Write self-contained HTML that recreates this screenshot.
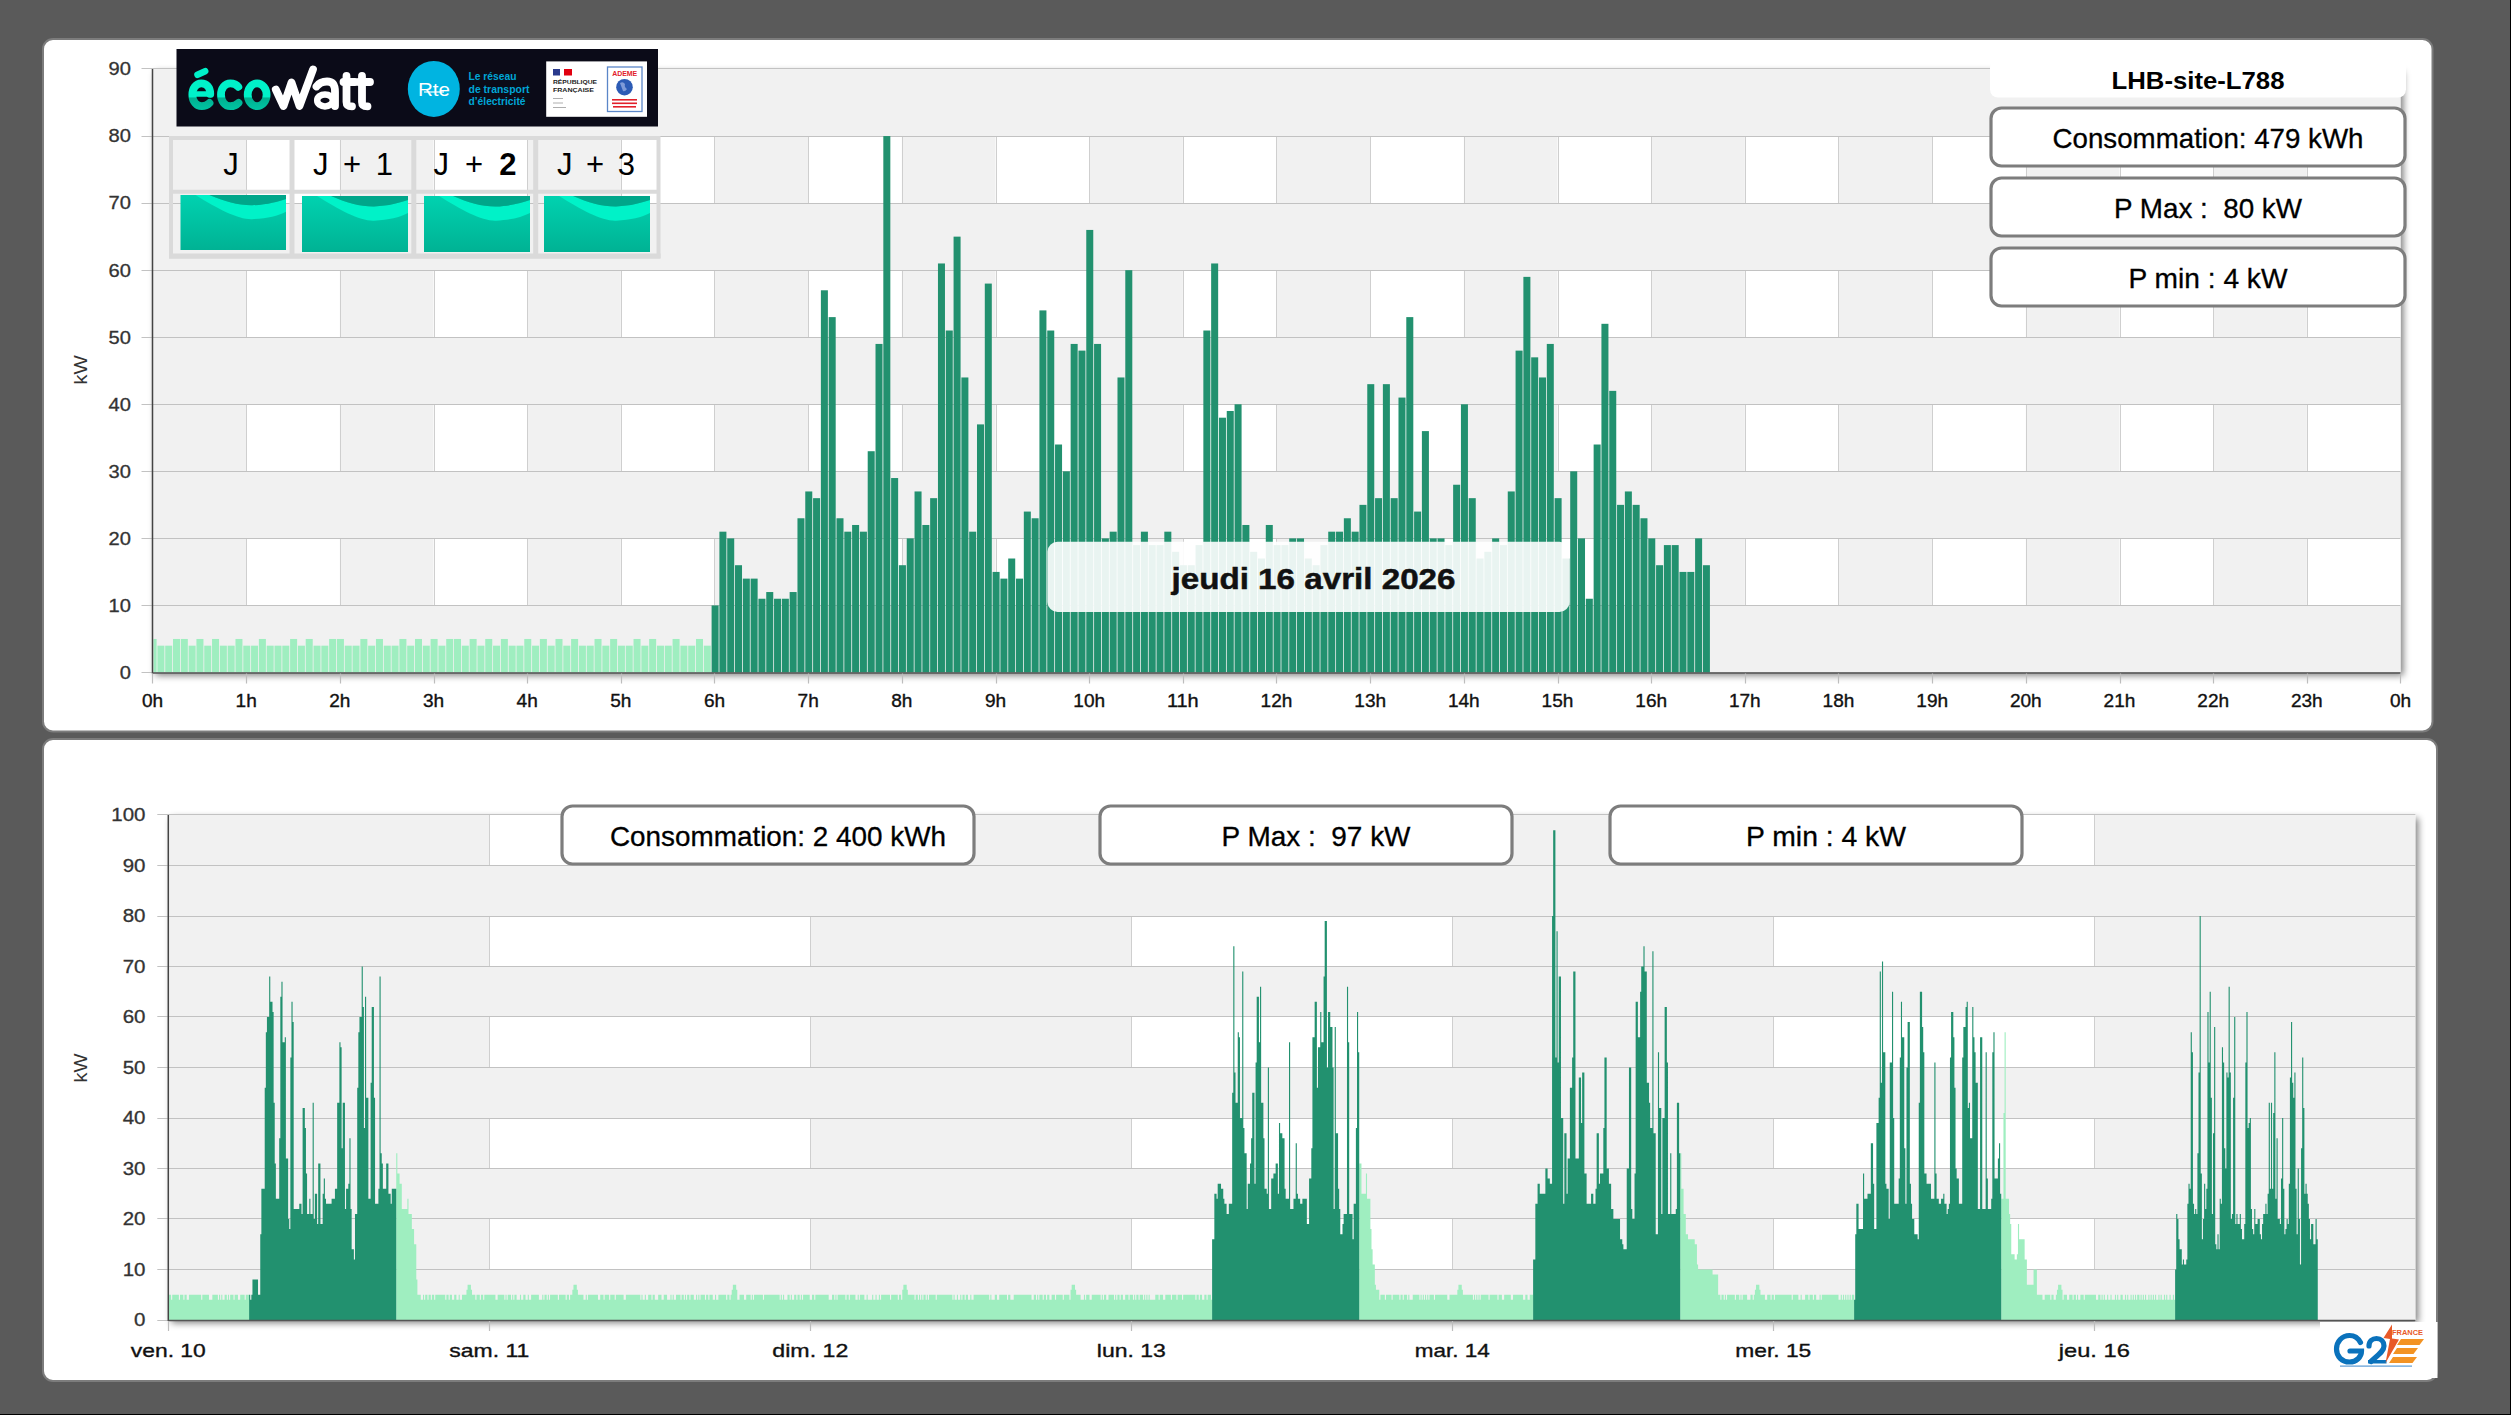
<!DOCTYPE html><html><head><meta charset="utf-8"><style>
html,body{margin:0;padding:0;background:#5a5a5a;width:2511px;height:1415px;overflow:hidden}
svg{display:block}
text{font-family:"Liberation Sans", sans-serif}
</style></head><body>
<svg width="2511" height="1415" viewBox="0 0 2511 1415">
<defs>
<filter id="psh" x="-5%" y="-5%" width="110%" height="115%"><feGaussianBlur in="SourceAlpha" stdDeviation="3.5"/><feOffset dx="3" dy="3" result="o"/><feComponentTransfer><feFuncA type="linear" slope="0.5"/></feComponentTransfer><feMerge><feMergeNode/><feMergeNode in="SourceGraphic"/></feMerge></filter>
<filter id="bsh" x="-5%" y="-20%" width="110%" height="140%"><feGaussianBlur in="SourceAlpha" stdDeviation="1.5"/><feOffset dx="1" dy="1" result="o"/><feComponentTransfer><feFuncA type="linear" slope="0.35"/></feComponentTransfer><feMerge><feMergeNode/><feMergeNode in="SourceGraphic"/></feMerge></filter>
<linearGradient id="wave" x1="0" y1="0" x2="0" y2="1"><stop offset="0" stop-color="#00d2b0"/><stop offset="1" stop-color="#00b294"/></linearGradient>
<linearGradient id="eco" gradientUnits="userSpaceOnUse" x1="0" y1="79" x2="0" y2="111"><stop offset="0" stop-color="#00f2c9"/><stop offset="0.55" stop-color="#00f2c9"/><stop offset="0.6" stop-color="#00b090"/><stop offset="1" stop-color="#00c7a5"/></linearGradient>
</defs>
<rect x="0" y="0" width="2511" height="1415" fill="#5a5a5a"/>

<rect x="43" y="39" width="2389.5" height="692.5" rx="10" ry="10" fill="#fff" stroke="#7c7c7c" stroke-width="2"/>
<rect x="43" y="739" width="2394" height="642" rx="10" ry="10" fill="#fff" stroke="#7c7c7c" stroke-width="2"/>
<rect x="152.5" y="69.0" width="2248.0" height="603.5" fill="#f1f1f1" filter="url(#psh)"/>
<rect x="246.17" y="538.39" width="93.67" height="67.06" fill="#fff"/>
<rect x="433.50" y="538.39" width="93.67" height="67.06" fill="#fff"/>
<rect x="620.83" y="538.39" width="93.67" height="67.06" fill="#fff"/>
<rect x="808.17" y="538.39" width="93.67" height="67.06" fill="#fff"/>
<rect x="995.50" y="538.39" width="93.67" height="67.06" fill="#fff"/>
<rect x="1182.83" y="538.39" width="93.67" height="67.06" fill="#fff"/>
<rect x="1370.17" y="538.39" width="93.67" height="67.06" fill="#fff"/>
<rect x="1557.50" y="538.39" width="93.67" height="67.06" fill="#fff"/>
<rect x="1744.83" y="538.39" width="93.67" height="67.06" fill="#fff"/>
<rect x="1932.17" y="538.39" width="93.67" height="67.06" fill="#fff"/>
<rect x="2119.50" y="538.39" width="93.67" height="67.06" fill="#fff"/>
<rect x="2306.83" y="538.39" width="93.67" height="67.06" fill="#fff"/>
<line x1="246.5" y1="538.39" x2="246.5" y2="605.44" stroke="#cfcfcf" stroke-width="1"/>
<line x1="340.5" y1="538.39" x2="340.5" y2="605.44" stroke="#cfcfcf" stroke-width="1"/>
<line x1="434.5" y1="538.39" x2="434.5" y2="605.44" stroke="#cfcfcf" stroke-width="1"/>
<line x1="527.5" y1="538.39" x2="527.5" y2="605.44" stroke="#cfcfcf" stroke-width="1"/>
<line x1="621.5" y1="538.39" x2="621.5" y2="605.44" stroke="#cfcfcf" stroke-width="1"/>
<line x1="714.5" y1="538.39" x2="714.5" y2="605.44" stroke="#cfcfcf" stroke-width="1"/>
<line x1="808.5" y1="538.39" x2="808.5" y2="605.44" stroke="#cfcfcf" stroke-width="1"/>
<line x1="902.5" y1="538.39" x2="902.5" y2="605.44" stroke="#cfcfcf" stroke-width="1"/>
<line x1="996.5" y1="538.39" x2="996.5" y2="605.44" stroke="#cfcfcf" stroke-width="1"/>
<line x1="1089.5" y1="538.39" x2="1089.5" y2="605.44" stroke="#cfcfcf" stroke-width="1"/>
<line x1="1183.5" y1="538.39" x2="1183.5" y2="605.44" stroke="#cfcfcf" stroke-width="1"/>
<line x1="1276.5" y1="538.39" x2="1276.5" y2="605.44" stroke="#cfcfcf" stroke-width="1"/>
<line x1="1370.5" y1="538.39" x2="1370.5" y2="605.44" stroke="#cfcfcf" stroke-width="1"/>
<line x1="1464.5" y1="538.39" x2="1464.5" y2="605.44" stroke="#cfcfcf" stroke-width="1"/>
<line x1="1558.5" y1="538.39" x2="1558.5" y2="605.44" stroke="#cfcfcf" stroke-width="1"/>
<line x1="1651.5" y1="538.39" x2="1651.5" y2="605.44" stroke="#cfcfcf" stroke-width="1"/>
<line x1="1745.5" y1="538.39" x2="1745.5" y2="605.44" stroke="#cfcfcf" stroke-width="1"/>
<line x1="1838.5" y1="538.39" x2="1838.5" y2="605.44" stroke="#cfcfcf" stroke-width="1"/>
<line x1="1932.5" y1="538.39" x2="1932.5" y2="605.44" stroke="#cfcfcf" stroke-width="1"/>
<line x1="2026.5" y1="538.39" x2="2026.5" y2="605.44" stroke="#cfcfcf" stroke-width="1"/>
<line x1="2120.5" y1="538.39" x2="2120.5" y2="605.44" stroke="#cfcfcf" stroke-width="1"/>
<line x1="2213.5" y1="538.39" x2="2213.5" y2="605.44" stroke="#cfcfcf" stroke-width="1"/>
<line x1="2307.5" y1="538.39" x2="2307.5" y2="605.44" stroke="#cfcfcf" stroke-width="1"/>
<rect x="246.17" y="404.28" width="93.67" height="67.06" fill="#fff"/>
<rect x="433.50" y="404.28" width="93.67" height="67.06" fill="#fff"/>
<rect x="620.83" y="404.28" width="93.67" height="67.06" fill="#fff"/>
<rect x="808.17" y="404.28" width="93.67" height="67.06" fill="#fff"/>
<rect x="995.50" y="404.28" width="93.67" height="67.06" fill="#fff"/>
<rect x="1182.83" y="404.28" width="93.67" height="67.06" fill="#fff"/>
<rect x="1370.17" y="404.28" width="93.67" height="67.06" fill="#fff"/>
<rect x="1557.50" y="404.28" width="93.67" height="67.06" fill="#fff"/>
<rect x="1744.83" y="404.28" width="93.67" height="67.06" fill="#fff"/>
<rect x="1932.17" y="404.28" width="93.67" height="67.06" fill="#fff"/>
<rect x="2119.50" y="404.28" width="93.67" height="67.06" fill="#fff"/>
<rect x="2306.83" y="404.28" width="93.67" height="67.06" fill="#fff"/>
<line x1="246.5" y1="404.28" x2="246.5" y2="471.33" stroke="#cfcfcf" stroke-width="1"/>
<line x1="340.5" y1="404.28" x2="340.5" y2="471.33" stroke="#cfcfcf" stroke-width="1"/>
<line x1="434.5" y1="404.28" x2="434.5" y2="471.33" stroke="#cfcfcf" stroke-width="1"/>
<line x1="527.5" y1="404.28" x2="527.5" y2="471.33" stroke="#cfcfcf" stroke-width="1"/>
<line x1="621.5" y1="404.28" x2="621.5" y2="471.33" stroke="#cfcfcf" stroke-width="1"/>
<line x1="714.5" y1="404.28" x2="714.5" y2="471.33" stroke="#cfcfcf" stroke-width="1"/>
<line x1="808.5" y1="404.28" x2="808.5" y2="471.33" stroke="#cfcfcf" stroke-width="1"/>
<line x1="902.5" y1="404.28" x2="902.5" y2="471.33" stroke="#cfcfcf" stroke-width="1"/>
<line x1="996.5" y1="404.28" x2="996.5" y2="471.33" stroke="#cfcfcf" stroke-width="1"/>
<line x1="1089.5" y1="404.28" x2="1089.5" y2="471.33" stroke="#cfcfcf" stroke-width="1"/>
<line x1="1183.5" y1="404.28" x2="1183.5" y2="471.33" stroke="#cfcfcf" stroke-width="1"/>
<line x1="1276.5" y1="404.28" x2="1276.5" y2="471.33" stroke="#cfcfcf" stroke-width="1"/>
<line x1="1370.5" y1="404.28" x2="1370.5" y2="471.33" stroke="#cfcfcf" stroke-width="1"/>
<line x1="1464.5" y1="404.28" x2="1464.5" y2="471.33" stroke="#cfcfcf" stroke-width="1"/>
<line x1="1558.5" y1="404.28" x2="1558.5" y2="471.33" stroke="#cfcfcf" stroke-width="1"/>
<line x1="1651.5" y1="404.28" x2="1651.5" y2="471.33" stroke="#cfcfcf" stroke-width="1"/>
<line x1="1745.5" y1="404.28" x2="1745.5" y2="471.33" stroke="#cfcfcf" stroke-width="1"/>
<line x1="1838.5" y1="404.28" x2="1838.5" y2="471.33" stroke="#cfcfcf" stroke-width="1"/>
<line x1="1932.5" y1="404.28" x2="1932.5" y2="471.33" stroke="#cfcfcf" stroke-width="1"/>
<line x1="2026.5" y1="404.28" x2="2026.5" y2="471.33" stroke="#cfcfcf" stroke-width="1"/>
<line x1="2120.5" y1="404.28" x2="2120.5" y2="471.33" stroke="#cfcfcf" stroke-width="1"/>
<line x1="2213.5" y1="404.28" x2="2213.5" y2="471.33" stroke="#cfcfcf" stroke-width="1"/>
<line x1="2307.5" y1="404.28" x2="2307.5" y2="471.33" stroke="#cfcfcf" stroke-width="1"/>
<rect x="246.17" y="270.17" width="93.67" height="67.06" fill="#fff"/>
<rect x="433.50" y="270.17" width="93.67" height="67.06" fill="#fff"/>
<rect x="620.83" y="270.17" width="93.67" height="67.06" fill="#fff"/>
<rect x="808.17" y="270.17" width="93.67" height="67.06" fill="#fff"/>
<rect x="995.50" y="270.17" width="93.67" height="67.06" fill="#fff"/>
<rect x="1182.83" y="270.17" width="93.67" height="67.06" fill="#fff"/>
<rect x="1370.17" y="270.17" width="93.67" height="67.06" fill="#fff"/>
<rect x="1557.50" y="270.17" width="93.67" height="67.06" fill="#fff"/>
<rect x="1744.83" y="270.17" width="93.67" height="67.06" fill="#fff"/>
<rect x="1932.17" y="270.17" width="93.67" height="67.06" fill="#fff"/>
<rect x="2119.50" y="270.17" width="93.67" height="67.06" fill="#fff"/>
<rect x="2306.83" y="270.17" width="93.67" height="67.06" fill="#fff"/>
<line x1="246.5" y1="270.17" x2="246.5" y2="337.22" stroke="#cfcfcf" stroke-width="1"/>
<line x1="340.5" y1="270.17" x2="340.5" y2="337.22" stroke="#cfcfcf" stroke-width="1"/>
<line x1="434.5" y1="270.17" x2="434.5" y2="337.22" stroke="#cfcfcf" stroke-width="1"/>
<line x1="527.5" y1="270.17" x2="527.5" y2="337.22" stroke="#cfcfcf" stroke-width="1"/>
<line x1="621.5" y1="270.17" x2="621.5" y2="337.22" stroke="#cfcfcf" stroke-width="1"/>
<line x1="714.5" y1="270.17" x2="714.5" y2="337.22" stroke="#cfcfcf" stroke-width="1"/>
<line x1="808.5" y1="270.17" x2="808.5" y2="337.22" stroke="#cfcfcf" stroke-width="1"/>
<line x1="902.5" y1="270.17" x2="902.5" y2="337.22" stroke="#cfcfcf" stroke-width="1"/>
<line x1="996.5" y1="270.17" x2="996.5" y2="337.22" stroke="#cfcfcf" stroke-width="1"/>
<line x1="1089.5" y1="270.17" x2="1089.5" y2="337.22" stroke="#cfcfcf" stroke-width="1"/>
<line x1="1183.5" y1="270.17" x2="1183.5" y2="337.22" stroke="#cfcfcf" stroke-width="1"/>
<line x1="1276.5" y1="270.17" x2="1276.5" y2="337.22" stroke="#cfcfcf" stroke-width="1"/>
<line x1="1370.5" y1="270.17" x2="1370.5" y2="337.22" stroke="#cfcfcf" stroke-width="1"/>
<line x1="1464.5" y1="270.17" x2="1464.5" y2="337.22" stroke="#cfcfcf" stroke-width="1"/>
<line x1="1558.5" y1="270.17" x2="1558.5" y2="337.22" stroke="#cfcfcf" stroke-width="1"/>
<line x1="1651.5" y1="270.17" x2="1651.5" y2="337.22" stroke="#cfcfcf" stroke-width="1"/>
<line x1="1745.5" y1="270.17" x2="1745.5" y2="337.22" stroke="#cfcfcf" stroke-width="1"/>
<line x1="1838.5" y1="270.17" x2="1838.5" y2="337.22" stroke="#cfcfcf" stroke-width="1"/>
<line x1="1932.5" y1="270.17" x2="1932.5" y2="337.22" stroke="#cfcfcf" stroke-width="1"/>
<line x1="2026.5" y1="270.17" x2="2026.5" y2="337.22" stroke="#cfcfcf" stroke-width="1"/>
<line x1="2120.5" y1="270.17" x2="2120.5" y2="337.22" stroke="#cfcfcf" stroke-width="1"/>
<line x1="2213.5" y1="270.17" x2="2213.5" y2="337.22" stroke="#cfcfcf" stroke-width="1"/>
<line x1="2307.5" y1="270.17" x2="2307.5" y2="337.22" stroke="#cfcfcf" stroke-width="1"/>
<rect x="246.17" y="136.06" width="93.67" height="67.06" fill="#fff"/>
<rect x="433.50" y="136.06" width="93.67" height="67.06" fill="#fff"/>
<rect x="620.83" y="136.06" width="93.67" height="67.06" fill="#fff"/>
<rect x="808.17" y="136.06" width="93.67" height="67.06" fill="#fff"/>
<rect x="995.50" y="136.06" width="93.67" height="67.06" fill="#fff"/>
<rect x="1182.83" y="136.06" width="93.67" height="67.06" fill="#fff"/>
<rect x="1370.17" y="136.06" width="93.67" height="67.06" fill="#fff"/>
<rect x="1557.50" y="136.06" width="93.67" height="67.06" fill="#fff"/>
<rect x="1744.83" y="136.06" width="93.67" height="67.06" fill="#fff"/>
<rect x="1932.17" y="136.06" width="93.67" height="67.06" fill="#fff"/>
<rect x="2119.50" y="136.06" width="93.67" height="67.06" fill="#fff"/>
<rect x="2306.83" y="136.06" width="93.67" height="67.06" fill="#fff"/>
<line x1="246.5" y1="136.06" x2="246.5" y2="203.11" stroke="#cfcfcf" stroke-width="1"/>
<line x1="340.5" y1="136.06" x2="340.5" y2="203.11" stroke="#cfcfcf" stroke-width="1"/>
<line x1="434.5" y1="136.06" x2="434.5" y2="203.11" stroke="#cfcfcf" stroke-width="1"/>
<line x1="527.5" y1="136.06" x2="527.5" y2="203.11" stroke="#cfcfcf" stroke-width="1"/>
<line x1="621.5" y1="136.06" x2="621.5" y2="203.11" stroke="#cfcfcf" stroke-width="1"/>
<line x1="714.5" y1="136.06" x2="714.5" y2="203.11" stroke="#cfcfcf" stroke-width="1"/>
<line x1="808.5" y1="136.06" x2="808.5" y2="203.11" stroke="#cfcfcf" stroke-width="1"/>
<line x1="902.5" y1="136.06" x2="902.5" y2="203.11" stroke="#cfcfcf" stroke-width="1"/>
<line x1="996.5" y1="136.06" x2="996.5" y2="203.11" stroke="#cfcfcf" stroke-width="1"/>
<line x1="1089.5" y1="136.06" x2="1089.5" y2="203.11" stroke="#cfcfcf" stroke-width="1"/>
<line x1="1183.5" y1="136.06" x2="1183.5" y2="203.11" stroke="#cfcfcf" stroke-width="1"/>
<line x1="1276.5" y1="136.06" x2="1276.5" y2="203.11" stroke="#cfcfcf" stroke-width="1"/>
<line x1="1370.5" y1="136.06" x2="1370.5" y2="203.11" stroke="#cfcfcf" stroke-width="1"/>
<line x1="1464.5" y1="136.06" x2="1464.5" y2="203.11" stroke="#cfcfcf" stroke-width="1"/>
<line x1="1558.5" y1="136.06" x2="1558.5" y2="203.11" stroke="#cfcfcf" stroke-width="1"/>
<line x1="1651.5" y1="136.06" x2="1651.5" y2="203.11" stroke="#cfcfcf" stroke-width="1"/>
<line x1="1745.5" y1="136.06" x2="1745.5" y2="203.11" stroke="#cfcfcf" stroke-width="1"/>
<line x1="1838.5" y1="136.06" x2="1838.5" y2="203.11" stroke="#cfcfcf" stroke-width="1"/>
<line x1="1932.5" y1="136.06" x2="1932.5" y2="203.11" stroke="#cfcfcf" stroke-width="1"/>
<line x1="2026.5" y1="136.06" x2="2026.5" y2="203.11" stroke="#cfcfcf" stroke-width="1"/>
<line x1="2120.5" y1="136.06" x2="2120.5" y2="203.11" stroke="#cfcfcf" stroke-width="1"/>
<line x1="2213.5" y1="136.06" x2="2213.5" y2="203.11" stroke="#cfcfcf" stroke-width="1"/>
<line x1="2307.5" y1="136.06" x2="2307.5" y2="203.11" stroke="#cfcfcf" stroke-width="1"/>
<line x1="141.5" y1="672.5" x2="2400.5" y2="672.5" stroke="#c2c2c2" stroke-width="1"/>
<line x1="141.5" y1="605.5" x2="2400.5" y2="605.5" stroke="#c2c2c2" stroke-width="1"/>
<line x1="141.5" y1="538.5" x2="2400.5" y2="538.5" stroke="#c2c2c2" stroke-width="1"/>
<line x1="141.5" y1="471.5" x2="2400.5" y2="471.5" stroke="#c2c2c2" stroke-width="1"/>
<line x1="141.5" y1="404.5" x2="2400.5" y2="404.5" stroke="#c2c2c2" stroke-width="1"/>
<line x1="141.5" y1="337.5" x2="2400.5" y2="337.5" stroke="#c2c2c2" stroke-width="1"/>
<line x1="141.5" y1="270.5" x2="2400.5" y2="270.5" stroke="#c2c2c2" stroke-width="1"/>
<line x1="141.5" y1="203.5" x2="2400.5" y2="203.5" stroke="#c2c2c2" stroke-width="1"/>
<line x1="141.5" y1="136.5" x2="2400.5" y2="136.5" stroke="#c2c2c2" stroke-width="1"/>
<line x1="141.5" y1="68.5" x2="2400.5" y2="68.5" stroke="#c2c2c2" stroke-width="1"/>
<rect x="153.50" y="638.97" width="3.10" height="33.53" fill="#9feec0"/>
<rect x="157.40" y="645.68" width="7.01" height="26.82" fill="#9feec0"/>
<rect x="165.21" y="645.68" width="7.01" height="26.82" fill="#9feec0"/>
<rect x="173.01" y="638.97" width="7.01" height="33.53" fill="#9feec0"/>
<rect x="180.82" y="638.97" width="7.01" height="33.53" fill="#9feec0"/>
<rect x="188.62" y="645.68" width="7.01" height="26.82" fill="#9feec0"/>
<rect x="196.43" y="638.97" width="7.01" height="33.53" fill="#9feec0"/>
<rect x="204.24" y="645.68" width="7.01" height="26.82" fill="#9feec0"/>
<rect x="212.04" y="638.97" width="7.01" height="33.53" fill="#9feec0"/>
<rect x="219.85" y="645.68" width="7.01" height="26.82" fill="#9feec0"/>
<rect x="227.65" y="645.68" width="7.01" height="26.82" fill="#9feec0"/>
<rect x="235.46" y="638.97" width="7.01" height="33.53" fill="#9feec0"/>
<rect x="243.26" y="645.68" width="7.01" height="26.82" fill="#9feec0"/>
<rect x="251.07" y="645.68" width="7.01" height="26.82" fill="#9feec0"/>
<rect x="258.88" y="638.97" width="7.01" height="33.53" fill="#9feec0"/>
<rect x="266.68" y="645.68" width="7.01" height="26.82" fill="#9feec0"/>
<rect x="274.49" y="645.68" width="7.01" height="26.82" fill="#9feec0"/>
<rect x="282.29" y="645.68" width="7.01" height="26.82" fill="#9feec0"/>
<rect x="290.10" y="638.97" width="7.01" height="33.53" fill="#9feec0"/>
<rect x="297.90" y="645.68" width="7.01" height="26.82" fill="#9feec0"/>
<rect x="305.71" y="638.97" width="7.01" height="33.53" fill="#9feec0"/>
<rect x="313.51" y="645.68" width="7.01" height="26.82" fill="#9feec0"/>
<rect x="321.32" y="645.68" width="7.01" height="26.82" fill="#9feec0"/>
<rect x="329.12" y="638.97" width="7.01" height="33.53" fill="#9feec0"/>
<rect x="336.93" y="638.97" width="7.01" height="33.53" fill="#9feec0"/>
<rect x="344.74" y="645.68" width="7.01" height="26.82" fill="#9feec0"/>
<rect x="352.54" y="645.68" width="7.01" height="26.82" fill="#9feec0"/>
<rect x="360.35" y="638.97" width="7.01" height="33.53" fill="#9feec0"/>
<rect x="368.15" y="645.68" width="7.01" height="26.82" fill="#9feec0"/>
<rect x="375.96" y="638.97" width="7.01" height="33.53" fill="#9feec0"/>
<rect x="383.76" y="645.68" width="7.01" height="26.82" fill="#9feec0"/>
<rect x="391.57" y="645.68" width="7.01" height="26.82" fill="#9feec0"/>
<rect x="399.38" y="638.97" width="7.01" height="33.53" fill="#9feec0"/>
<rect x="407.18" y="645.68" width="7.01" height="26.82" fill="#9feec0"/>
<rect x="414.99" y="638.97" width="7.01" height="33.53" fill="#9feec0"/>
<rect x="422.79" y="645.68" width="7.01" height="26.82" fill="#9feec0"/>
<rect x="430.60" y="638.97" width="7.01" height="33.53" fill="#9feec0"/>
<rect x="438.40" y="645.68" width="7.01" height="26.82" fill="#9feec0"/>
<rect x="446.21" y="638.97" width="7.01" height="33.53" fill="#9feec0"/>
<rect x="454.01" y="638.97" width="7.01" height="33.53" fill="#9feec0"/>
<rect x="461.82" y="645.68" width="7.01" height="26.82" fill="#9feec0"/>
<rect x="469.62" y="638.97" width="7.01" height="33.53" fill="#9feec0"/>
<rect x="477.43" y="645.68" width="7.01" height="26.82" fill="#9feec0"/>
<rect x="485.24" y="638.97" width="7.01" height="33.53" fill="#9feec0"/>
<rect x="493.04" y="645.68" width="7.01" height="26.82" fill="#9feec0"/>
<rect x="500.85" y="638.97" width="7.01" height="33.53" fill="#9feec0"/>
<rect x="508.65" y="645.68" width="7.01" height="26.82" fill="#9feec0"/>
<rect x="516.46" y="645.68" width="7.01" height="26.82" fill="#9feec0"/>
<rect x="524.26" y="638.97" width="7.01" height="33.53" fill="#9feec0"/>
<rect x="532.07" y="645.68" width="7.01" height="26.82" fill="#9feec0"/>
<rect x="539.88" y="638.97" width="7.01" height="33.53" fill="#9feec0"/>
<rect x="547.68" y="645.68" width="7.01" height="26.82" fill="#9feec0"/>
<rect x="555.49" y="638.97" width="7.01" height="33.53" fill="#9feec0"/>
<rect x="563.29" y="645.68" width="7.01" height="26.82" fill="#9feec0"/>
<rect x="571.10" y="638.97" width="7.01" height="33.53" fill="#9feec0"/>
<rect x="578.90" y="645.68" width="7.01" height="26.82" fill="#9feec0"/>
<rect x="586.71" y="645.68" width="7.01" height="26.82" fill="#9feec0"/>
<rect x="594.51" y="638.97" width="7.01" height="33.53" fill="#9feec0"/>
<rect x="602.32" y="645.68" width="7.01" height="26.82" fill="#9feec0"/>
<rect x="610.12" y="638.97" width="7.01" height="33.53" fill="#9feec0"/>
<rect x="617.93" y="645.68" width="7.01" height="26.82" fill="#9feec0"/>
<rect x="625.74" y="645.68" width="7.01" height="26.82" fill="#9feec0"/>
<rect x="633.54" y="638.97" width="7.01" height="33.53" fill="#9feec0"/>
<rect x="641.35" y="645.68" width="7.01" height="26.82" fill="#9feec0"/>
<rect x="649.15" y="638.97" width="7.01" height="33.53" fill="#9feec0"/>
<rect x="656.96" y="645.68" width="7.01" height="26.82" fill="#9feec0"/>
<rect x="664.76" y="645.68" width="7.01" height="26.82" fill="#9feec0"/>
<rect x="672.57" y="638.97" width="7.01" height="33.53" fill="#9feec0"/>
<rect x="680.38" y="645.68" width="7.01" height="26.82" fill="#9feec0"/>
<rect x="688.18" y="645.68" width="7.01" height="26.82" fill="#9feec0"/>
<rect x="695.99" y="638.97" width="7.01" height="33.53" fill="#9feec0"/>
<rect x="703.79" y="645.68" width="7.01" height="26.82" fill="#9feec0"/>
<rect x="711.60" y="605.44" width="7.01" height="67.06" fill="#22916f"/>
<rect x="719.40" y="531.68" width="7.01" height="140.82" fill="#22916f"/>
<rect x="727.21" y="538.39" width="7.01" height="134.11" fill="#22916f"/>
<rect x="735.01" y="565.21" width="7.01" height="107.29" fill="#22916f"/>
<rect x="742.82" y="578.62" width="7.01" height="93.88" fill="#22916f"/>
<rect x="750.62" y="578.62" width="7.01" height="93.88" fill="#22916f"/>
<rect x="758.43" y="598.74" width="7.01" height="73.76" fill="#22916f"/>
<rect x="766.24" y="592.03" width="7.01" height="80.47" fill="#22916f"/>
<rect x="774.04" y="598.74" width="7.01" height="73.76" fill="#22916f"/>
<rect x="781.85" y="598.74" width="7.01" height="73.76" fill="#22916f"/>
<rect x="789.65" y="592.03" width="7.01" height="80.47" fill="#22916f"/>
<rect x="797.46" y="518.27" width="7.01" height="154.23" fill="#22916f"/>
<rect x="805.26" y="491.45" width="7.01" height="181.05" fill="#22916f"/>
<rect x="813.07" y="498.16" width="7.01" height="174.34" fill="#22916f"/>
<rect x="820.88" y="290.28" width="7.01" height="382.22" fill="#22916f"/>
<rect x="828.68" y="317.11" width="7.01" height="355.39" fill="#22916f"/>
<rect x="836.49" y="518.27" width="7.01" height="154.23" fill="#22916f"/>
<rect x="844.29" y="531.68" width="7.01" height="140.82" fill="#22916f"/>
<rect x="852.10" y="524.98" width="7.01" height="147.52" fill="#22916f"/>
<rect x="859.90" y="531.68" width="7.01" height="140.82" fill="#22916f"/>
<rect x="867.71" y="451.22" width="7.01" height="221.28" fill="#22916f"/>
<rect x="875.51" y="343.93" width="7.01" height="328.57" fill="#22916f"/>
<rect x="883.32" y="136.06" width="7.01" height="536.44" fill="#22916f"/>
<rect x="891.13" y="478.04" width="7.01" height="194.46" fill="#22916f"/>
<rect x="898.93" y="565.21" width="7.01" height="107.29" fill="#22916f"/>
<rect x="906.74" y="538.39" width="7.01" height="134.11" fill="#22916f"/>
<rect x="914.54" y="491.45" width="7.01" height="181.05" fill="#22916f"/>
<rect x="922.35" y="524.98" width="7.01" height="147.52" fill="#22916f"/>
<rect x="930.15" y="498.16" width="7.01" height="174.34" fill="#22916f"/>
<rect x="937.96" y="263.46" width="7.01" height="409.04" fill="#22916f"/>
<rect x="945.76" y="330.52" width="7.01" height="341.98" fill="#22916f"/>
<rect x="953.57" y="236.64" width="7.01" height="435.86" fill="#22916f"/>
<rect x="961.38" y="377.46" width="7.01" height="295.04" fill="#22916f"/>
<rect x="969.18" y="531.68" width="7.01" height="140.82" fill="#22916f"/>
<rect x="976.99" y="424.39" width="7.01" height="248.11" fill="#22916f"/>
<rect x="984.79" y="283.58" width="7.01" height="388.92" fill="#22916f"/>
<rect x="992.60" y="571.92" width="7.01" height="100.58" fill="#22916f"/>
<rect x="1000.40" y="578.62" width="7.01" height="93.88" fill="#22916f"/>
<rect x="1008.21" y="558.51" width="7.01" height="113.99" fill="#22916f"/>
<rect x="1016.01" y="578.62" width="7.01" height="93.88" fill="#22916f"/>
<rect x="1023.82" y="511.57" width="7.01" height="160.93" fill="#22916f"/>
<rect x="1031.62" y="518.27" width="7.01" height="154.23" fill="#22916f"/>
<rect x="1039.43" y="310.40" width="7.01" height="362.10" fill="#22916f"/>
<rect x="1047.24" y="330.52" width="7.01" height="341.98" fill="#22916f"/>
<rect x="1055.04" y="444.51" width="7.01" height="227.99" fill="#22916f"/>
<rect x="1062.85" y="471.33" width="7.01" height="201.17" fill="#22916f"/>
<rect x="1070.65" y="343.93" width="7.01" height="328.57" fill="#22916f"/>
<rect x="1078.46" y="350.63" width="7.01" height="321.87" fill="#22916f"/>
<rect x="1086.26" y="229.93" width="7.01" height="442.57" fill="#22916f"/>
<rect x="1094.07" y="343.93" width="7.01" height="328.57" fill="#22916f"/>
<rect x="1101.88" y="538.39" width="7.01" height="134.11" fill="#22916f"/>
<rect x="1109.68" y="531.68" width="7.01" height="140.82" fill="#22916f"/>
<rect x="1117.49" y="377.46" width="7.01" height="295.04" fill="#22916f"/>
<rect x="1125.29" y="270.17" width="7.01" height="402.33" fill="#22916f"/>
<rect x="1133.10" y="545.09" width="7.01" height="127.41" fill="#22916f"/>
<rect x="1140.90" y="531.68" width="7.01" height="140.82" fill="#22916f"/>
<rect x="1148.71" y="545.09" width="7.01" height="127.41" fill="#22916f"/>
<rect x="1156.51" y="545.09" width="7.01" height="127.41" fill="#22916f"/>
<rect x="1164.32" y="531.68" width="7.01" height="140.82" fill="#22916f"/>
<rect x="1172.12" y="551.80" width="7.01" height="120.70" fill="#22916f"/>
<rect x="1179.93" y="565.21" width="7.01" height="107.29" fill="#22916f"/>
<rect x="1187.74" y="565.21" width="7.01" height="107.29" fill="#22916f"/>
<rect x="1195.54" y="545.09" width="7.01" height="127.41" fill="#22916f"/>
<rect x="1203.35" y="330.52" width="7.01" height="341.98" fill="#22916f"/>
<rect x="1211.15" y="263.46" width="7.01" height="409.04" fill="#22916f"/>
<rect x="1218.96" y="417.69" width="7.01" height="254.81" fill="#22916f"/>
<rect x="1226.76" y="410.98" width="7.01" height="261.52" fill="#22916f"/>
<rect x="1234.57" y="404.28" width="7.01" height="268.22" fill="#22916f"/>
<rect x="1242.38" y="524.98" width="7.01" height="147.52" fill="#22916f"/>
<rect x="1250.18" y="551.80" width="7.01" height="120.70" fill="#22916f"/>
<rect x="1257.99" y="558.51" width="7.01" height="113.99" fill="#22916f"/>
<rect x="1265.79" y="524.98" width="7.01" height="147.52" fill="#22916f"/>
<rect x="1273.60" y="545.09" width="7.01" height="127.41" fill="#22916f"/>
<rect x="1281.40" y="545.09" width="7.01" height="127.41" fill="#22916f"/>
<rect x="1289.21" y="538.39" width="7.01" height="134.11" fill="#22916f"/>
<rect x="1297.01" y="538.39" width="7.01" height="134.11" fill="#22916f"/>
<rect x="1304.82" y="558.51" width="7.01" height="113.99" fill="#22916f"/>
<rect x="1312.62" y="565.21" width="7.01" height="107.29" fill="#22916f"/>
<rect x="1320.43" y="545.09" width="7.01" height="127.41" fill="#22916f"/>
<rect x="1328.24" y="531.68" width="7.01" height="140.82" fill="#22916f"/>
<rect x="1336.04" y="531.68" width="7.01" height="140.82" fill="#22916f"/>
<rect x="1343.85" y="518.27" width="7.01" height="154.23" fill="#22916f"/>
<rect x="1351.65" y="531.68" width="7.01" height="140.82" fill="#22916f"/>
<rect x="1359.46" y="504.86" width="7.01" height="167.64" fill="#22916f"/>
<rect x="1367.26" y="384.16" width="7.01" height="288.34" fill="#22916f"/>
<rect x="1375.07" y="498.16" width="7.01" height="174.34" fill="#22916f"/>
<rect x="1382.88" y="384.16" width="7.01" height="288.34" fill="#22916f"/>
<rect x="1390.68" y="498.16" width="7.01" height="174.34" fill="#22916f"/>
<rect x="1398.49" y="397.57" width="7.01" height="274.93" fill="#22916f"/>
<rect x="1406.29" y="317.11" width="7.01" height="355.39" fill="#22916f"/>
<rect x="1414.10" y="511.57" width="7.01" height="160.93" fill="#22916f"/>
<rect x="1421.90" y="431.10" width="7.01" height="241.40" fill="#22916f"/>
<rect x="1429.71" y="538.39" width="7.01" height="134.11" fill="#22916f"/>
<rect x="1437.51" y="538.39" width="7.01" height="134.11" fill="#22916f"/>
<rect x="1445.32" y="545.09" width="7.01" height="127.41" fill="#22916f"/>
<rect x="1453.13" y="484.74" width="7.01" height="187.76" fill="#22916f"/>
<rect x="1460.93" y="404.28" width="7.01" height="268.22" fill="#22916f"/>
<rect x="1468.74" y="498.16" width="7.01" height="174.34" fill="#22916f"/>
<rect x="1476.54" y="558.51" width="7.01" height="113.99" fill="#22916f"/>
<rect x="1484.35" y="551.80" width="7.01" height="120.70" fill="#22916f"/>
<rect x="1492.15" y="538.39" width="7.01" height="134.11" fill="#22916f"/>
<rect x="1499.96" y="545.09" width="7.01" height="127.41" fill="#22916f"/>
<rect x="1507.76" y="491.45" width="7.01" height="181.05" fill="#22916f"/>
<rect x="1515.57" y="350.63" width="7.01" height="321.87" fill="#22916f"/>
<rect x="1523.38" y="276.87" width="7.01" height="395.63" fill="#22916f"/>
<rect x="1531.18" y="357.34" width="7.01" height="315.16" fill="#22916f"/>
<rect x="1538.99" y="377.46" width="7.01" height="295.04" fill="#22916f"/>
<rect x="1546.79" y="343.93" width="7.01" height="328.57" fill="#22916f"/>
<rect x="1554.60" y="498.16" width="7.01" height="174.34" fill="#22916f"/>
<rect x="1562.40" y="558.51" width="7.01" height="113.99" fill="#22916f"/>
<rect x="1570.21" y="471.33" width="7.01" height="201.17" fill="#22916f"/>
<rect x="1578.01" y="538.39" width="7.01" height="134.11" fill="#22916f"/>
<rect x="1585.82" y="598.74" width="7.01" height="73.76" fill="#22916f"/>
<rect x="1593.63" y="444.51" width="7.01" height="227.99" fill="#22916f"/>
<rect x="1601.43" y="323.81" width="7.01" height="348.69" fill="#22916f"/>
<rect x="1609.24" y="390.87" width="7.01" height="281.63" fill="#22916f"/>
<rect x="1617.04" y="504.86" width="7.01" height="167.64" fill="#22916f"/>
<rect x="1624.85" y="491.45" width="7.01" height="181.05" fill="#22916f"/>
<rect x="1632.65" y="504.86" width="7.01" height="167.64" fill="#22916f"/>
<rect x="1640.46" y="518.27" width="7.01" height="154.23" fill="#22916f"/>
<rect x="1648.26" y="538.39" width="7.01" height="134.11" fill="#22916f"/>
<rect x="1656.07" y="565.21" width="7.01" height="107.29" fill="#22916f"/>
<rect x="1663.88" y="545.09" width="7.01" height="127.41" fill="#22916f"/>
<rect x="1671.68" y="545.09" width="7.01" height="127.41" fill="#22916f"/>
<rect x="1679.49" y="571.92" width="7.01" height="100.58" fill="#22916f"/>
<rect x="1687.29" y="571.92" width="7.01" height="100.58" fill="#22916f"/>
<rect x="1695.10" y="538.39" width="7.01" height="134.11" fill="#22916f"/>
<rect x="1702.90" y="565.21" width="7.01" height="107.29" fill="#22916f"/>
<line x1="152.5" y1="69.0" x2="152.5" y2="673.5" stroke="#444" stroke-width="1.5"/>
<line x1="152.5" y1="673.0" x2="2400.5" y2="673.0" stroke="#555" stroke-width="1.5"/>
<line x1="152.5" y1="673.5" x2="152.5" y2="683.5" stroke="#bdbdbd" stroke-width="1.2"/>
<text x="152.5" y="706.5" font-size="18" text-anchor="middle" fill="#111" stroke="#111" stroke-width="0.35" textLength="21.2" lengthAdjust="spacingAndGlyphs">0h</text>
<line x1="246.5" y1="673.5" x2="246.5" y2="683.5" stroke="#bdbdbd" stroke-width="1.2"/>
<text x="246.2" y="706.5" font-size="18" text-anchor="middle" fill="#111" stroke="#111" stroke-width="0.35" textLength="21.2" lengthAdjust="spacingAndGlyphs">1h</text>
<line x1="340.5" y1="673.5" x2="340.5" y2="683.5" stroke="#bdbdbd" stroke-width="1.2"/>
<text x="339.8" y="706.5" font-size="18" text-anchor="middle" fill="#111" stroke="#111" stroke-width="0.35" textLength="21.2" lengthAdjust="spacingAndGlyphs">2h</text>
<line x1="434.5" y1="673.5" x2="434.5" y2="683.5" stroke="#bdbdbd" stroke-width="1.2"/>
<text x="433.5" y="706.5" font-size="18" text-anchor="middle" fill="#111" stroke="#111" stroke-width="0.35" textLength="21.2" lengthAdjust="spacingAndGlyphs">3h</text>
<line x1="527.5" y1="673.5" x2="527.5" y2="683.5" stroke="#bdbdbd" stroke-width="1.2"/>
<text x="527.2" y="706.5" font-size="18" text-anchor="middle" fill="#111" stroke="#111" stroke-width="0.35" textLength="21.2" lengthAdjust="spacingAndGlyphs">4h</text>
<line x1="621.5" y1="673.5" x2="621.5" y2="683.5" stroke="#bdbdbd" stroke-width="1.2"/>
<text x="620.8" y="706.5" font-size="18" text-anchor="middle" fill="#111" stroke="#111" stroke-width="0.35" textLength="21.2" lengthAdjust="spacingAndGlyphs">5h</text>
<line x1="714.5" y1="673.5" x2="714.5" y2="683.5" stroke="#bdbdbd" stroke-width="1.2"/>
<text x="714.5" y="706.5" font-size="18" text-anchor="middle" fill="#111" stroke="#111" stroke-width="0.35" textLength="21.2" lengthAdjust="spacingAndGlyphs">6h</text>
<line x1="808.5" y1="673.5" x2="808.5" y2="683.5" stroke="#bdbdbd" stroke-width="1.2"/>
<text x="808.2" y="706.5" font-size="18" text-anchor="middle" fill="#111" stroke="#111" stroke-width="0.35" textLength="21.2" lengthAdjust="spacingAndGlyphs">7h</text>
<line x1="902.5" y1="673.5" x2="902.5" y2="683.5" stroke="#bdbdbd" stroke-width="1.2"/>
<text x="901.8" y="706.5" font-size="18" text-anchor="middle" fill="#111" stroke="#111" stroke-width="0.35" textLength="21.2" lengthAdjust="spacingAndGlyphs">8h</text>
<line x1="996.5" y1="673.5" x2="996.5" y2="683.5" stroke="#bdbdbd" stroke-width="1.2"/>
<text x="995.5" y="706.5" font-size="18" text-anchor="middle" fill="#111" stroke="#111" stroke-width="0.35" textLength="21.2" lengthAdjust="spacingAndGlyphs">9h</text>
<line x1="1089.5" y1="673.5" x2="1089.5" y2="683.5" stroke="#bdbdbd" stroke-width="1.2"/>
<text x="1089.2" y="706.5" font-size="18" text-anchor="middle" fill="#111" stroke="#111" stroke-width="0.35" textLength="31.8" lengthAdjust="spacingAndGlyphs">10h</text>
<line x1="1183.5" y1="673.5" x2="1183.5" y2="683.5" stroke="#bdbdbd" stroke-width="1.2"/>
<text x="1182.8" y="706.5" font-size="18" text-anchor="middle" fill="#111" stroke="#111" stroke-width="0.35" textLength="31.8" lengthAdjust="spacingAndGlyphs">11h</text>
<line x1="1276.5" y1="673.5" x2="1276.5" y2="683.5" stroke="#bdbdbd" stroke-width="1.2"/>
<text x="1276.5" y="706.5" font-size="18" text-anchor="middle" fill="#111" stroke="#111" stroke-width="0.35" textLength="31.8" lengthAdjust="spacingAndGlyphs">12h</text>
<line x1="1370.5" y1="673.5" x2="1370.5" y2="683.5" stroke="#bdbdbd" stroke-width="1.2"/>
<text x="1370.2" y="706.5" font-size="18" text-anchor="middle" fill="#111" stroke="#111" stroke-width="0.35" textLength="31.8" lengthAdjust="spacingAndGlyphs">13h</text>
<line x1="1464.5" y1="673.5" x2="1464.5" y2="683.5" stroke="#bdbdbd" stroke-width="1.2"/>
<text x="1463.8" y="706.5" font-size="18" text-anchor="middle" fill="#111" stroke="#111" stroke-width="0.35" textLength="31.8" lengthAdjust="spacingAndGlyphs">14h</text>
<line x1="1558.5" y1="673.5" x2="1558.5" y2="683.5" stroke="#bdbdbd" stroke-width="1.2"/>
<text x="1557.5" y="706.5" font-size="18" text-anchor="middle" fill="#111" stroke="#111" stroke-width="0.35" textLength="31.8" lengthAdjust="spacingAndGlyphs">15h</text>
<line x1="1651.5" y1="673.5" x2="1651.5" y2="683.5" stroke="#bdbdbd" stroke-width="1.2"/>
<text x="1651.2" y="706.5" font-size="18" text-anchor="middle" fill="#111" stroke="#111" stroke-width="0.35" textLength="31.8" lengthAdjust="spacingAndGlyphs">16h</text>
<line x1="1745.5" y1="673.5" x2="1745.5" y2="683.5" stroke="#bdbdbd" stroke-width="1.2"/>
<text x="1744.8" y="706.5" font-size="18" text-anchor="middle" fill="#111" stroke="#111" stroke-width="0.35" textLength="31.8" lengthAdjust="spacingAndGlyphs">17h</text>
<line x1="1838.5" y1="673.5" x2="1838.5" y2="683.5" stroke="#bdbdbd" stroke-width="1.2"/>
<text x="1838.5" y="706.5" font-size="18" text-anchor="middle" fill="#111" stroke="#111" stroke-width="0.35" textLength="31.8" lengthAdjust="spacingAndGlyphs">18h</text>
<line x1="1932.5" y1="673.5" x2="1932.5" y2="683.5" stroke="#bdbdbd" stroke-width="1.2"/>
<text x="1932.2" y="706.5" font-size="18" text-anchor="middle" fill="#111" stroke="#111" stroke-width="0.35" textLength="31.8" lengthAdjust="spacingAndGlyphs">19h</text>
<line x1="2026.5" y1="673.5" x2="2026.5" y2="683.5" stroke="#bdbdbd" stroke-width="1.2"/>
<text x="2025.8" y="706.5" font-size="18" text-anchor="middle" fill="#111" stroke="#111" stroke-width="0.35" textLength="31.8" lengthAdjust="spacingAndGlyphs">20h</text>
<line x1="2120.5" y1="673.5" x2="2120.5" y2="683.5" stroke="#bdbdbd" stroke-width="1.2"/>
<text x="2119.5" y="706.5" font-size="18" text-anchor="middle" fill="#111" stroke="#111" stroke-width="0.35" textLength="31.8" lengthAdjust="spacingAndGlyphs">21h</text>
<line x1="2213.5" y1="673.5" x2="2213.5" y2="683.5" stroke="#bdbdbd" stroke-width="1.2"/>
<text x="2213.2" y="706.5" font-size="18" text-anchor="middle" fill="#111" stroke="#111" stroke-width="0.35" textLength="31.8" lengthAdjust="spacingAndGlyphs">22h</text>
<line x1="2307.5" y1="673.5" x2="2307.5" y2="683.5" stroke="#bdbdbd" stroke-width="1.2"/>
<text x="2306.8" y="706.5" font-size="18" text-anchor="middle" fill="#111" stroke="#111" stroke-width="0.35" textLength="31.8" lengthAdjust="spacingAndGlyphs">23h</text>
<line x1="2400.5" y1="673.5" x2="2400.5" y2="683.5" stroke="#bdbdbd" stroke-width="1.2"/>
<text x="2400.5" y="706.5" font-size="18" text-anchor="middle" fill="#111" stroke="#111" stroke-width="0.35" textLength="21.2" lengthAdjust="spacingAndGlyphs">0h</text>
<text x="131" y="678.8" font-size="18" text-anchor="end" fill="#333" stroke="#333" stroke-width="0.3" textLength="11.2" lengthAdjust="spacingAndGlyphs">0</text>
<text x="131" y="611.7" font-size="18" text-anchor="end" fill="#333" stroke="#333" stroke-width="0.3" textLength="22.4" lengthAdjust="spacingAndGlyphs">10</text>
<text x="131" y="544.7" font-size="18" text-anchor="end" fill="#333" stroke="#333" stroke-width="0.3" textLength="22.4" lengthAdjust="spacingAndGlyphs">20</text>
<text x="131" y="477.6" font-size="18" text-anchor="end" fill="#333" stroke="#333" stroke-width="0.3" textLength="22.4" lengthAdjust="spacingAndGlyphs">30</text>
<text x="131" y="410.6" font-size="18" text-anchor="end" fill="#333" stroke="#333" stroke-width="0.3" textLength="22.4" lengthAdjust="spacingAndGlyphs">40</text>
<text x="131" y="343.5" font-size="18" text-anchor="end" fill="#333" stroke="#333" stroke-width="0.3" textLength="22.4" lengthAdjust="spacingAndGlyphs">50</text>
<text x="131" y="276.5" font-size="18" text-anchor="end" fill="#333" stroke="#333" stroke-width="0.3" textLength="22.4" lengthAdjust="spacingAndGlyphs">60</text>
<text x="131" y="209.4" font-size="18" text-anchor="end" fill="#333" stroke="#333" stroke-width="0.3" textLength="22.4" lengthAdjust="spacingAndGlyphs">70</text>
<text x="131" y="142.4" font-size="18" text-anchor="end" fill="#333" stroke="#333" stroke-width="0.3" textLength="22.4" lengthAdjust="spacingAndGlyphs">80</text>
<text x="131" y="75.3" font-size="18" text-anchor="end" fill="#333" stroke="#333" stroke-width="0.3" textLength="22.4" lengthAdjust="spacingAndGlyphs">90</text>
<text transform="translate(86.5,370) rotate(-90)" font-size="19" text-anchor="middle" fill="#333" textLength="29.5" lengthAdjust="spacingAndGlyphs">kW</text>
<rect x="1047.5" y="541.8" width="522" height="70.2" rx="10" ry="10" fill="rgba(255,255,255,0.9)"/>
<text x="1313.5" y="588.5" font-size="29" font-weight="bold" text-anchor="middle" fill="#111" stroke="#111" stroke-width="0.5" textLength="284" lengthAdjust="spacingAndGlyphs">jeudi 16 avril 2026</text>
<rect x="1990" y="60" width="416" height="37.5" rx="8" ry="8" fill="#fff"/>
<text x="2198" y="89" font-size="24" font-weight="bold" text-anchor="middle" fill="#000" textLength="173" lengthAdjust="spacingAndGlyphs">LHB-site-L788</text>
<rect x="1991" y="108" width="414" height="58" rx="10.5" ry="10.5" fill="#fff" stroke="#7d7d7d" stroke-width="3.2"/>
<text x="2208.0" y="147.5" font-size="28" text-anchor="middle" fill="#000" stroke="#000" stroke-width="0.3" textLength="311" lengthAdjust="spacingAndGlyphs">Consommation: 479 kWh</text>
<rect x="1991" y="178" width="414" height="58" rx="10.5" ry="10.5" fill="#fff" stroke="#7d7d7d" stroke-width="3.2"/>
<text x="2208.0" y="217.5" font-size="28" text-anchor="middle" fill="#000" stroke="#000" stroke-width="0.3" textLength="188" lengthAdjust="spacingAndGlyphs">P Max :&#160; 80 kW</text>
<rect x="1991" y="248" width="414" height="58" rx="10.5" ry="10.5" fill="#fff" stroke="#7d7d7d" stroke-width="3.2"/>
<text x="2208.0" y="287.5" font-size="28" text-anchor="middle" fill="#000" stroke="#000" stroke-width="0.3" textLength="159" lengthAdjust="spacingAndGlyphs">P min : 4 kW</text>
<rect x="168.3" y="815.0" width="2247.0" height="505.0" fill="#f1f1f1" filter="url(#psh)"/>
<rect x="489.30" y="1219.00" width="321.00" height="50.50" fill="#fff"/>
<rect x="1131.30" y="1219.00" width="321.00" height="50.50" fill="#fff"/>
<rect x="1773.30" y="1219.00" width="321.00" height="50.50" fill="#fff"/>
<line x1="489.5" y1="1219.00" x2="489.5" y2="1269.50" stroke="#cfcfcf" stroke-width="1"/>
<line x1="810.5" y1="1219.00" x2="810.5" y2="1269.50" stroke="#cfcfcf" stroke-width="1"/>
<line x1="1131.5" y1="1219.00" x2="1131.5" y2="1269.50" stroke="#cfcfcf" stroke-width="1"/>
<line x1="1452.5" y1="1219.00" x2="1452.5" y2="1269.50" stroke="#cfcfcf" stroke-width="1"/>
<line x1="1773.5" y1="1219.00" x2="1773.5" y2="1269.50" stroke="#cfcfcf" stroke-width="1"/>
<line x1="2094.5" y1="1219.00" x2="2094.5" y2="1269.50" stroke="#cfcfcf" stroke-width="1"/>
<rect x="489.30" y="1118.00" width="321.00" height="50.50" fill="#fff"/>
<rect x="1131.30" y="1118.00" width="321.00" height="50.50" fill="#fff"/>
<rect x="1773.30" y="1118.00" width="321.00" height="50.50" fill="#fff"/>
<line x1="489.5" y1="1118.00" x2="489.5" y2="1168.50" stroke="#cfcfcf" stroke-width="1"/>
<line x1="810.5" y1="1118.00" x2="810.5" y2="1168.50" stroke="#cfcfcf" stroke-width="1"/>
<line x1="1131.5" y1="1118.00" x2="1131.5" y2="1168.50" stroke="#cfcfcf" stroke-width="1"/>
<line x1="1452.5" y1="1118.00" x2="1452.5" y2="1168.50" stroke="#cfcfcf" stroke-width="1"/>
<line x1="1773.5" y1="1118.00" x2="1773.5" y2="1168.50" stroke="#cfcfcf" stroke-width="1"/>
<line x1="2094.5" y1="1118.00" x2="2094.5" y2="1168.50" stroke="#cfcfcf" stroke-width="1"/>
<rect x="489.30" y="1017.00" width="321.00" height="50.50" fill="#fff"/>
<rect x="1131.30" y="1017.00" width="321.00" height="50.50" fill="#fff"/>
<rect x="1773.30" y="1017.00" width="321.00" height="50.50" fill="#fff"/>
<line x1="489.5" y1="1017.00" x2="489.5" y2="1067.50" stroke="#cfcfcf" stroke-width="1"/>
<line x1="810.5" y1="1017.00" x2="810.5" y2="1067.50" stroke="#cfcfcf" stroke-width="1"/>
<line x1="1131.5" y1="1017.00" x2="1131.5" y2="1067.50" stroke="#cfcfcf" stroke-width="1"/>
<line x1="1452.5" y1="1017.00" x2="1452.5" y2="1067.50" stroke="#cfcfcf" stroke-width="1"/>
<line x1="1773.5" y1="1017.00" x2="1773.5" y2="1067.50" stroke="#cfcfcf" stroke-width="1"/>
<line x1="2094.5" y1="1017.00" x2="2094.5" y2="1067.50" stroke="#cfcfcf" stroke-width="1"/>
<rect x="489.30" y="916.00" width="321.00" height="50.50" fill="#fff"/>
<rect x="1131.30" y="916.00" width="321.00" height="50.50" fill="#fff"/>
<rect x="1773.30" y="916.00" width="321.00" height="50.50" fill="#fff"/>
<line x1="489.5" y1="916.00" x2="489.5" y2="966.50" stroke="#cfcfcf" stroke-width="1"/>
<line x1="810.5" y1="916.00" x2="810.5" y2="966.50" stroke="#cfcfcf" stroke-width="1"/>
<line x1="1131.5" y1="916.00" x2="1131.5" y2="966.50" stroke="#cfcfcf" stroke-width="1"/>
<line x1="1452.5" y1="916.00" x2="1452.5" y2="966.50" stroke="#cfcfcf" stroke-width="1"/>
<line x1="1773.5" y1="916.00" x2="1773.5" y2="966.50" stroke="#cfcfcf" stroke-width="1"/>
<line x1="2094.5" y1="916.00" x2="2094.5" y2="966.50" stroke="#cfcfcf" stroke-width="1"/>
<rect x="489.30" y="815.00" width="321.00" height="50.50" fill="#fff"/>
<rect x="1131.30" y="815.00" width="321.00" height="50.50" fill="#fff"/>
<rect x="1773.30" y="815.00" width="321.00" height="50.50" fill="#fff"/>
<line x1="489.5" y1="815.00" x2="489.5" y2="865.50" stroke="#cfcfcf" stroke-width="1"/>
<line x1="810.5" y1="815.00" x2="810.5" y2="865.50" stroke="#cfcfcf" stroke-width="1"/>
<line x1="1131.5" y1="815.00" x2="1131.5" y2="865.50" stroke="#cfcfcf" stroke-width="1"/>
<line x1="1452.5" y1="815.00" x2="1452.5" y2="865.50" stroke="#cfcfcf" stroke-width="1"/>
<line x1="1773.5" y1="815.00" x2="1773.5" y2="865.50" stroke="#cfcfcf" stroke-width="1"/>
<line x1="2094.5" y1="815.00" x2="2094.5" y2="865.50" stroke="#cfcfcf" stroke-width="1"/>
<line x1="157.3" y1="1320.5" x2="2415.3" y2="1320.5" stroke="#c2c2c2" stroke-width="1"/>
<line x1="157.3" y1="1269.5" x2="2415.3" y2="1269.5" stroke="#c2c2c2" stroke-width="1"/>
<line x1="157.3" y1="1218.5" x2="2415.3" y2="1218.5" stroke="#c2c2c2" stroke-width="1"/>
<line x1="157.3" y1="1168.5" x2="2415.3" y2="1168.5" stroke="#c2c2c2" stroke-width="1"/>
<line x1="157.3" y1="1118.5" x2="2415.3" y2="1118.5" stroke="#c2c2c2" stroke-width="1"/>
<line x1="157.3" y1="1067.5" x2="2415.3" y2="1067.5" stroke="#c2c2c2" stroke-width="1"/>
<line x1="157.3" y1="1016.5" x2="2415.3" y2="1016.5" stroke="#c2c2c2" stroke-width="1"/>
<line x1="157.3" y1="966.5" x2="2415.3" y2="966.5" stroke="#c2c2c2" stroke-width="1"/>
<line x1="157.3" y1="916.5" x2="2415.3" y2="916.5" stroke="#c2c2c2" stroke-width="1"/>
<line x1="157.3" y1="865.5" x2="2415.3" y2="865.5" stroke="#c2c2c2" stroke-width="1"/>
<line x1="157.3" y1="814.5" x2="2415.3" y2="814.5" stroke="#c2c2c2" stroke-width="1"/>
<path d="M168.86 1320.0V1294.75H169.97V1294.75H171.09V1299.80H172.20V1294.75H173.32V1294.75H174.43V1294.75H175.54V1294.75H176.66V1294.75H177.77V1294.75H178.89V1299.80H180.00V1294.75H181.12V1294.75H182.23V1294.75H183.35V1299.80H184.46V1294.75H185.58V1294.75H186.69V1299.80H187.81V1299.80H188.92V1294.75H190.03V1294.75H191.15V1294.75H192.26V1294.75H193.38V1294.75H194.49V1294.75H195.61V1294.75H196.72V1294.75H197.84V1294.75H198.95V1294.75H200.07V1294.75H201.18V1299.80H202.29V1294.75H203.41V1294.75H204.52V1294.75H205.64V1294.75H206.75V1294.75H207.87V1294.75H208.98V1299.80H210.10V1299.80H211.21V1299.80H212.33V1294.75H213.44V1294.75H214.56V1294.75H215.67V1294.75H216.78V1294.75H217.90V1299.80H219.01V1294.75H220.13V1299.80H221.24V1294.75H222.36V1299.80H223.47V1299.80H224.59V1294.75H225.70V1294.75H226.82V1299.80H227.93V1294.75H229.04V1299.80H230.16V1294.75H231.27V1294.75H232.39V1294.75H233.50V1299.80H234.62V1294.75H235.73V1294.75H236.85V1294.75H237.96V1299.80H239.08V1299.80H240.19V1294.75H241.31V1294.75H242.42V1294.75H243.53V1294.75H244.65V1299.80H245.76V1294.75H246.88V1294.75H247.99V1294.75H249.11V1320.0ZM396.23 1320.0V1153.35H397.35V1173.55H398.46V1173.55H399.58V1183.65H400.69V1183.65H401.81V1208.90H402.92V1208.90H404.03V1208.90H405.15V1208.90H406.26V1208.90H407.38V1198.80H408.49V1213.95H409.61V1213.95H410.72V1213.95H411.84V1229.10H412.95V1229.10H414.07V1244.25H415.18V1244.25H416.29V1279.60H417.41V1294.75H418.52V1294.75H419.64V1294.75H420.75V1299.80H421.87V1299.80H422.98V1294.75H424.10V1299.80H425.21V1294.75H426.33V1294.75H427.44V1299.80H428.56V1294.75H429.67V1294.75H430.78V1299.80H431.90V1294.75H433.01V1294.75H434.13V1299.80H435.24V1294.75H436.36V1294.75H437.47V1294.75H438.59V1294.75H439.70V1294.75H440.82V1294.75H441.93V1294.75H443.04V1294.75H444.16V1294.75H445.27V1299.80H446.39V1294.75H447.50V1294.75H448.62V1299.80H449.73V1294.75H450.85V1294.75H451.96V1299.80H453.08V1299.80H454.19V1294.75H455.31V1294.75H456.42V1299.80H457.53V1299.80H458.65V1294.75H459.76V1299.80H460.88V1299.80H461.99V1294.75H463.11V1294.75H464.22V1294.75H465.34V1294.75H466.45V1289.70H467.57V1284.65H468.68V1284.65H469.79V1284.65H470.91V1289.70H472.02V1294.75H473.14V1294.75H474.25V1294.75H475.37V1299.80H476.48V1294.75H477.60V1294.75H478.71V1294.75H479.83V1299.80H480.94V1294.75H482.06V1294.75H483.17V1299.80H484.28V1294.75H485.40V1294.75H486.51V1294.75H487.63V1294.75H488.74V1294.75H489.86V1294.75H490.97V1294.75H492.09V1294.75H493.20V1294.75H494.32V1294.75H495.43V1299.80H496.54V1299.80H497.66V1294.75H498.77V1294.75H499.89V1294.75H501.00V1294.75H502.12V1294.75H503.23V1294.75H504.35V1299.80H505.46V1294.75H506.58V1299.80H507.69V1294.75H508.81V1294.75H509.92V1294.75H511.03V1299.80H512.15V1294.75H513.26V1299.80H514.38V1294.75H515.49V1294.75H516.61V1299.80H517.72V1299.80H518.84V1299.80H519.95V1294.75H521.07V1299.80H522.18V1299.80H523.29V1294.75H524.41V1294.75H525.52V1299.80H526.64V1299.80H527.75V1294.75H528.87V1299.80H529.98V1299.80H531.10V1294.75H532.21V1294.75H533.33V1294.75H534.44V1294.75H535.56V1294.75H536.67V1294.75H537.78V1294.75H538.90V1299.80H540.01V1299.80H541.13V1299.80H542.24V1294.75H543.36V1299.80H544.47V1294.75H545.59V1294.75H546.70V1299.80H547.82V1294.75H548.93V1299.80H550.04V1294.75H551.16V1294.75H552.27V1294.75H553.39V1294.75H554.50V1294.75H555.62V1294.75H556.73V1294.75H557.85V1299.80H558.96V1294.75H560.08V1294.75H561.19V1294.75H562.31V1294.75H563.42V1294.75H564.53V1294.75H565.65V1299.80H566.76V1294.75H567.88V1294.75H568.99V1299.80H570.11V1294.75H571.22V1294.75H572.34V1289.70H573.45V1284.65H574.57V1284.65H575.68V1284.65H576.79V1289.70H577.91V1294.75H579.02V1294.75H580.14V1294.75H581.25V1294.75H582.37V1294.75H583.48V1299.80H584.60V1299.80H585.71V1294.75H586.83V1299.80H587.94V1294.75H589.06V1294.75H590.17V1294.75H591.28V1294.75H592.40V1294.75H593.51V1294.75H594.63V1294.75H595.74V1294.75H596.86V1294.75H597.97V1299.80H599.09V1299.80H600.20V1294.75H601.32V1294.75H602.43V1294.75H603.54V1299.80H604.66V1294.75H605.77V1294.75H606.89V1294.75H608.00V1294.75H609.12V1299.80H610.23V1294.75H611.35V1294.75H612.46V1294.75H613.58V1294.75H614.69V1299.80H615.81V1294.75H616.92V1294.75H618.03V1294.75H619.15V1294.75H620.26V1294.75H621.38V1294.75H622.49V1294.75H623.61V1299.80H624.72V1299.80H625.84V1294.75H626.95V1294.75H628.07V1294.75H629.18V1294.75H630.29V1294.75H631.41V1294.75H632.52V1294.75H633.64V1294.75H634.75V1294.75H635.87V1294.75H636.98V1294.75H638.10V1294.75H639.21V1294.75H640.33V1299.80H641.44V1294.75H642.56V1299.80H643.67V1299.80H644.78V1294.75H645.90V1299.80H647.01V1299.80H648.13V1294.75H649.24V1294.75H650.36V1294.75H651.47V1299.80H652.59V1294.75H653.70V1294.75H654.82V1299.80H655.93V1299.80H657.04V1299.80H658.16V1294.75H659.27V1294.75H660.39V1294.75H661.50V1299.80H662.62V1299.80H663.73V1294.75H664.85V1294.75H665.96V1294.75H667.08V1299.80H668.19V1299.80H669.31V1299.80H670.42V1294.75H671.53V1299.80H672.65V1294.75H673.76V1299.80H674.88V1299.80H675.99V1294.75H677.11V1294.75H678.22V1294.75H679.34V1294.75H680.45V1299.80H681.57V1294.75H682.68V1294.75H683.79V1299.80H684.91V1294.75H686.02V1299.80H687.14V1294.75H688.25V1294.75H689.37V1299.80H690.48V1294.75H691.60V1294.75H692.71V1294.75H693.83V1299.80H694.94V1299.80H696.06V1294.75H697.17V1299.80H698.28V1294.75H699.40V1299.80H700.51V1294.75H701.63V1294.75H702.74V1294.75H703.86V1294.75H704.97V1299.80H706.09V1294.75H707.20V1294.75H708.32V1299.80H709.43V1294.75H710.54V1294.75H711.66V1294.75H712.77V1299.80H713.89V1299.80H715.00V1294.75H716.12V1299.80H717.23V1299.80H718.35V1294.75H719.46V1294.75H720.58V1294.75H721.69V1294.75H722.81V1294.75H723.92V1294.75H725.03V1294.75H726.15V1299.80H727.26V1294.75H728.38V1294.75H729.49V1299.80H730.61V1294.75H731.72V1289.70H732.84V1284.65H733.95V1284.65H735.07V1284.65H736.18V1289.70H737.29V1299.80H738.41V1299.80H739.52V1294.75H740.64V1294.75H741.75V1294.75H742.87V1294.75H743.98V1299.80H745.10V1299.80H746.21V1294.75H747.33V1294.75H748.44V1294.75H749.56V1294.75H750.67V1299.80H751.78V1294.75H752.90V1299.80H754.01V1294.75H755.13V1294.75H756.24V1294.75H757.36V1294.75H758.47V1294.75H759.59V1294.75H760.70V1294.75H761.82V1294.75H762.93V1299.80H764.04V1294.75H765.16V1294.75H766.27V1294.75H767.39V1294.75H768.50V1294.75H769.62V1294.75H770.73V1294.75H771.85V1294.75H772.96V1294.75H774.08V1294.75H775.19V1294.75H776.31V1294.75H777.42V1294.75H778.53V1294.75H779.65V1299.80H780.76V1294.75H781.88V1299.80H782.99V1294.75H784.11V1299.80H785.22V1299.80H786.34V1299.80H787.45V1294.75H788.57V1294.75H789.68V1299.80H790.79V1294.75H791.91V1299.80H793.02V1299.80H794.14V1294.75H795.25V1294.75H796.37V1299.80H797.48V1294.75H798.60V1294.75H799.71V1299.80H800.83V1294.75H801.94V1299.80H803.06V1294.75H804.17V1294.75H805.28V1294.75H806.40V1294.75H807.51V1294.75H808.63V1294.75H809.74V1299.80H810.86V1299.80H811.97V1294.75H813.09V1294.75H814.20V1299.80H815.32V1294.75H816.43V1294.75H817.54V1294.75H818.66V1294.75H819.77V1294.75H820.89V1294.75H822.00V1294.75H823.12V1294.75H824.23V1294.75H825.35V1294.75H826.46V1294.75H827.58V1294.75H828.69V1299.80H829.81V1299.80H830.92V1299.80H832.03V1294.75H833.15V1294.75H834.26V1299.80H835.38V1294.75H836.49V1299.80H837.61V1294.75H838.72V1294.75H839.84V1294.75H840.95V1294.75H842.07V1294.75H843.18V1294.75H844.29V1294.75H845.41V1299.80H846.52V1294.75H847.64V1294.75H848.75V1299.80H849.87V1294.75H850.98V1294.75H852.10V1294.75H853.21V1294.75H854.33V1294.75H855.44V1299.80H856.56V1299.80H857.67V1294.75H858.78V1299.80H859.90V1294.75H861.01V1294.75H862.13V1294.75H863.24V1294.75H864.36V1299.80H865.47V1299.80H866.59V1294.75H867.70V1299.80H868.82V1299.80H869.93V1299.80H871.04V1299.80H872.16V1294.75H873.27V1299.80H874.39V1299.80H875.50V1294.75H876.62V1299.80H877.73V1299.80H878.85V1294.75H879.96V1299.80H881.08V1294.75H882.19V1294.75H883.31V1294.75H884.42V1294.75H885.53V1294.75H886.65V1294.75H887.76V1294.75H888.88V1294.75H889.99V1299.80H891.11V1294.75H892.22V1294.75H893.34V1294.75H894.45V1294.75H895.57V1294.75H896.68V1294.75H897.79V1299.80H898.91V1294.75H900.02V1294.75H901.14V1299.80H902.25V1289.70H903.37V1284.65H904.48V1284.65H905.60V1284.65H906.71V1289.70H907.83V1294.75H908.94V1294.75H910.06V1294.75H911.17V1294.75H912.28V1294.75H913.40V1294.75H914.51V1299.80H915.63V1294.75H916.74V1294.75H917.86V1299.80H918.97V1294.75H920.09V1299.80H921.20V1294.75H922.32V1299.80H923.43V1294.75H924.54V1294.75H925.66V1299.80H926.77V1294.75H927.89V1299.80H929.00V1294.75H930.12V1294.75H931.23V1294.75H932.35V1294.75H933.46V1294.75H934.58V1294.75H935.69V1299.80H936.81V1294.75H937.92V1294.75H939.03V1294.75H940.15V1294.75H941.26V1294.75H942.38V1294.75H943.49V1294.75H944.61V1294.75H945.72V1294.75H946.84V1294.75H947.95V1294.75H949.07V1294.75H950.18V1294.75H951.29V1294.75H952.41V1299.80H953.52V1294.75H954.64V1299.80H955.75V1299.80H956.87V1294.75H957.98V1299.80H959.10V1299.80H960.21V1294.75H961.33V1299.80H962.44V1294.75H963.56V1294.75H964.67V1299.80H965.78V1294.75H966.90V1294.75H968.01V1299.80H969.13V1299.80H970.24V1294.75H971.36V1299.80H972.47V1299.80H973.59V1294.75H974.70V1294.75H975.82V1294.75H976.93V1294.75H978.04V1294.75H979.16V1294.75H980.27V1294.75H981.39V1294.75H982.50V1294.75H983.62V1294.75H984.73V1294.75H985.85V1294.75H986.96V1294.75H988.08V1294.75H989.19V1299.80H990.31V1294.75H991.42V1299.80H992.53V1299.80H993.65V1299.80H994.76V1294.75H995.88V1294.75H996.99V1299.80H998.11V1299.80H999.22V1294.75H1000.34V1294.75H1001.45V1294.75H1002.57V1294.75H1003.68V1294.75H1004.79V1294.75H1005.91V1294.75H1007.02V1299.80H1008.14V1294.75H1009.25V1294.75H1010.37V1299.80H1011.48V1299.80H1012.60V1299.80H1013.71V1294.75H1014.83V1294.75H1015.94V1294.75H1017.06V1294.75H1018.17V1294.75H1019.28V1294.75H1020.40V1294.75H1021.51V1294.75H1022.63V1294.75H1023.74V1294.75H1024.86V1294.75H1025.97V1294.75H1027.09V1294.75H1028.20V1294.75H1029.32V1294.75H1030.43V1294.75H1031.54V1299.80H1032.66V1299.80H1033.77V1294.75H1034.89V1294.75H1036.00V1299.80H1037.12V1294.75H1038.23V1299.80H1039.35V1294.75H1040.46V1294.75H1041.58V1294.75H1042.69V1299.80H1043.81V1294.75H1044.92V1294.75H1046.03V1299.80H1047.15V1294.75H1048.26V1294.75H1049.38V1299.80H1050.49V1299.80H1051.61V1294.75H1052.72V1294.75H1053.84V1294.75H1054.95V1299.80H1056.07V1294.75H1057.18V1294.75H1058.29V1294.75H1059.41V1294.75H1060.52V1294.75H1061.64V1294.75H1062.75V1299.80H1063.87V1294.75H1064.98V1294.75H1066.10V1294.75H1067.21V1294.75H1068.33V1294.75H1069.44V1299.80H1070.56V1289.70H1071.67V1284.65H1072.78V1284.65H1073.90V1284.65H1075.01V1289.70H1076.13V1294.75H1077.24V1294.75H1078.36V1294.75H1079.47V1294.75H1080.59V1299.80H1081.70V1299.80H1082.82V1299.80H1083.93V1294.75H1085.04V1299.80H1086.16V1294.75H1087.27V1294.75H1088.39V1294.75H1089.50V1299.80H1090.62V1299.80H1091.73V1294.75H1092.85V1294.75H1093.96V1294.75H1095.08V1294.75H1096.19V1294.75H1097.31V1294.75H1098.42V1294.75H1099.53V1294.75H1100.65V1299.80H1101.76V1294.75H1102.88V1299.80H1103.99V1294.75H1105.11V1294.75H1106.22V1299.80H1107.34V1299.80H1108.45V1294.75H1109.57V1294.75H1110.68V1294.75H1111.79V1294.75H1112.91V1294.75H1114.02V1299.80H1115.14V1294.75H1116.25V1299.80H1117.37V1294.75H1118.48V1294.75H1119.60V1299.80H1120.71V1294.75H1121.83V1294.75H1122.94V1299.80H1124.06V1299.80H1125.17V1294.75H1126.28V1294.75H1127.40V1294.75H1128.51V1299.80H1129.63V1294.75H1130.74V1294.75H1131.86V1294.75H1132.97V1299.80H1134.09V1294.75H1135.20V1299.80H1136.32V1294.75H1137.43V1294.75H1138.54V1299.80H1139.66V1294.75H1140.77V1294.75H1141.89V1294.75H1143.00V1299.80H1144.12V1294.75H1145.23V1299.80H1146.35V1294.75H1147.46V1299.80H1148.58V1294.75H1149.69V1299.80H1150.81V1299.80H1151.92V1299.80H1153.03V1299.80H1154.15V1299.80H1155.26V1294.75H1156.38V1294.75H1157.49V1294.75H1158.61V1299.80H1159.72V1294.75H1160.84V1294.75H1161.95V1294.75H1163.07V1299.80H1164.18V1299.80H1165.29V1294.75H1166.41V1294.75H1167.52V1294.75H1168.64V1294.75H1169.75V1294.75H1170.87V1299.80H1171.98V1294.75H1173.10V1294.75H1174.21V1294.75H1175.33V1294.75H1176.44V1299.80H1177.56V1294.75H1178.67V1294.75H1179.78V1294.75H1180.90V1294.75H1182.01V1299.80H1183.13V1294.75H1184.24V1294.75H1185.36V1294.75H1186.47V1294.75H1187.59V1294.75H1188.70V1294.75H1189.82V1294.75H1190.93V1294.75H1192.04V1294.75H1193.16V1294.75H1194.27V1294.75H1195.39V1299.80H1196.50V1294.75H1197.62V1294.75H1198.73V1299.80H1199.85V1294.75H1200.96V1294.75H1202.08V1299.80H1203.19V1299.80H1204.31V1294.75H1205.42V1294.75H1206.53V1299.80H1207.65V1294.75H1208.76V1294.75H1209.88V1294.75H1210.99V1299.80H1212.11V1320.0ZM1359.23 1320.0V1163.45H1360.35V1163.45H1361.46V1193.75H1362.58V1193.75H1363.69V1193.75H1364.81V1193.75H1365.92V1173.55H1367.03V1198.80H1368.15V1198.80H1369.26V1198.80H1370.38V1229.10H1371.49V1249.30H1372.61V1264.45H1373.72V1264.45H1374.84V1284.65H1375.95V1289.70H1377.07V1289.70H1378.18V1289.70H1379.29V1299.80H1380.41V1294.75H1381.52V1294.75H1382.64V1294.75H1383.75V1294.75H1384.87V1299.80H1385.98V1294.75H1387.10V1294.75H1388.21V1294.75H1389.33V1294.75H1390.44V1294.75H1391.56V1299.80H1392.67V1294.75H1393.78V1294.75H1394.90V1294.75H1396.01V1294.75H1397.13V1294.75H1398.24V1294.75H1399.36V1299.80H1400.47V1294.75H1401.59V1294.75H1402.70V1299.80H1403.82V1294.75H1404.93V1294.75H1406.04V1294.75H1407.16V1299.80H1408.27V1294.75H1409.39V1299.80H1410.50V1299.80H1411.62V1299.80H1412.73V1294.75H1413.85V1294.75H1414.96V1294.75H1416.08V1294.75H1417.19V1294.75H1418.31V1294.75H1419.42V1299.80H1420.53V1294.75H1421.65V1299.80H1422.76V1294.75H1423.88V1299.80H1424.99V1294.75H1426.11V1299.80H1427.22V1294.75H1428.34V1299.80H1429.45V1294.75H1430.57V1294.75H1431.68V1294.75H1432.79V1294.75H1433.91V1299.80H1435.02V1294.75H1436.14V1294.75H1437.25V1294.75H1438.37V1294.75H1439.48V1294.75H1440.60V1294.75H1441.71V1294.75H1442.83V1294.75H1443.94V1294.75H1445.06V1294.75H1446.17V1294.75H1447.28V1299.80H1448.40V1299.80H1449.51V1294.75H1450.63V1294.75H1451.74V1294.75H1452.86V1294.75H1453.97V1294.75H1455.09V1294.75H1456.20V1294.75H1457.32V1289.70H1458.43V1284.65H1459.54V1284.65H1460.66V1284.65H1461.77V1289.70H1462.89V1294.75H1464.00V1294.75H1465.12V1294.75H1466.23V1294.75H1467.35V1294.75H1468.46V1294.75H1469.58V1294.75H1470.69V1294.75H1471.81V1294.75H1472.92V1299.80H1474.03V1294.75H1475.15V1299.80H1476.26V1294.75H1477.38V1299.80H1478.49V1294.75H1479.61V1299.80H1480.72V1294.75H1481.84V1294.75H1482.95V1294.75H1484.07V1294.75H1485.18V1294.75H1486.29V1294.75H1487.41V1294.75H1488.52V1299.80H1489.64V1294.75H1490.75V1294.75H1491.87V1294.75H1492.98V1294.75H1494.10V1294.75H1495.21V1294.75H1496.33V1294.75H1497.44V1299.80H1498.56V1294.75H1499.67V1294.75H1500.78V1294.75H1501.90V1299.80H1503.01V1299.80H1504.13V1294.75H1505.24V1294.75H1506.36V1294.75H1507.47V1294.75H1508.59V1294.75H1509.70V1294.75H1510.82V1299.80H1511.93V1299.80H1513.04V1294.75H1514.16V1294.75H1515.27V1294.75H1516.39V1294.75H1517.50V1294.75H1518.62V1294.75H1519.73V1294.75H1520.85V1294.75H1521.96V1294.75H1523.08V1299.80H1524.19V1299.80H1525.31V1294.75H1526.42V1294.75H1527.53V1299.80H1528.65V1299.80H1529.76V1294.75H1530.88V1294.75H1531.99V1294.75H1533.11V1320.0ZM1680.23 1320.0V1153.35H1681.35V1188.70H1682.46V1188.70H1683.58V1213.95H1684.69V1213.95H1685.81V1234.15H1686.92V1234.15H1688.03V1239.20H1689.15V1239.20H1690.26V1239.20H1691.38V1239.20H1692.49V1239.20H1693.61V1239.20H1694.72V1244.25H1695.84V1244.25H1696.95V1264.45H1698.07V1269.50H1699.18V1269.50H1700.29V1269.50H1701.41V1269.50H1702.52V1269.50H1703.64V1269.50H1704.75V1269.50H1705.87V1269.50H1706.98V1269.50H1708.10V1269.50H1709.21V1269.50H1710.33V1269.50H1711.44V1269.50H1712.56V1274.55H1713.67V1274.55H1714.78V1274.55H1715.90V1274.55H1717.01V1274.55H1718.13V1294.75H1719.24V1294.75H1720.36V1299.80H1721.47V1294.75H1722.59V1294.75H1723.70V1299.80H1724.82V1294.75H1725.93V1299.80H1727.04V1294.75H1728.16V1294.75H1729.27V1294.75H1730.39V1294.75H1731.50V1294.75H1732.62V1294.75H1733.73V1294.75H1734.85V1299.80H1735.96V1294.75H1737.08V1294.75H1738.19V1294.75H1739.31V1299.80H1740.42V1294.75H1741.53V1299.80H1742.65V1294.75H1743.76V1294.75H1744.88V1294.75H1745.99V1294.75H1747.11V1299.80H1748.22V1299.80H1749.34V1299.80H1750.45V1294.75H1751.57V1294.75H1752.68V1299.80H1753.79V1294.75H1754.91V1289.70H1756.02V1284.65H1757.14V1284.65H1758.25V1284.65H1759.37V1289.70H1760.48V1294.75H1761.60V1294.75H1762.71V1294.75H1763.83V1294.75H1764.94V1299.80H1766.06V1299.80H1767.17V1294.75H1768.28V1294.75H1769.40V1294.75H1770.51V1299.80H1771.63V1294.75H1772.74V1294.75H1773.86V1299.80H1774.97V1294.75H1776.09V1294.75H1777.20V1294.75H1778.32V1294.75H1779.43V1294.75H1780.54V1294.75H1781.66V1294.75H1782.77V1294.75H1783.89V1294.75H1785.00V1294.75H1786.12V1294.75H1787.23V1294.75H1788.35V1294.75H1789.46V1294.75H1790.58V1294.75H1791.69V1299.80H1792.81V1294.75H1793.92V1294.75H1795.03V1294.75H1796.15V1294.75H1797.26V1294.75H1798.38V1299.80H1799.49V1299.80H1800.61V1294.75H1801.72V1299.80H1802.84V1299.80H1803.95V1299.80H1805.07V1294.75H1806.18V1294.75H1807.29V1294.75H1808.41V1299.80H1809.52V1294.75H1810.64V1294.75H1811.75V1294.75H1812.87V1299.80H1813.98V1294.75H1815.10V1294.75H1816.21V1299.80H1817.33V1299.80H1818.44V1299.80H1819.56V1294.75H1820.67V1299.80H1821.78V1294.75H1822.90V1294.75H1824.01V1294.75H1825.13V1294.75H1826.24V1294.75H1827.36V1294.75H1828.47V1294.75H1829.59V1294.75H1830.70V1294.75H1831.82V1294.75H1832.93V1294.75H1834.04V1294.75H1835.16V1294.75H1836.27V1294.75H1837.39V1294.75H1838.50V1299.80H1839.62V1299.80H1840.73V1294.75H1841.85V1299.80H1842.96V1294.75H1844.08V1299.80H1845.19V1294.75H1846.31V1299.80H1847.42V1294.75H1848.53V1299.80H1849.65V1294.75H1850.76V1299.80H1851.88V1294.75H1852.99V1294.75H1854.11V1320.0ZM2001.23 1320.0V1198.80H2002.35V1198.80H2003.46V1112.95H2004.58V1032.15H2005.69V1198.80H2006.81V1198.80H2007.92V1198.80H2009.03V1213.95H2010.15V1224.05H2011.26V1254.35H2012.38V1254.35H2013.49V1254.35H2014.61V1259.40H2015.72V1259.40H2016.84V1254.35H2017.95V1224.05H2019.07V1239.20H2020.18V1239.20H2021.29V1239.20H2022.41V1239.20H2023.52V1239.20H2024.64V1259.40H2025.75V1259.40H2026.87V1284.65H2027.98V1284.65H2029.10V1284.65H2030.21V1284.65H2031.33V1284.65H2032.44V1284.65H2033.56V1269.50H2034.67V1269.50H2035.78V1269.50H2036.90V1294.75H2038.01V1294.75H2039.13V1294.75H2040.24V1294.75H2041.36V1294.75H2042.47V1299.80H2043.59V1299.80H2044.70V1294.75H2045.82V1294.75H2046.93V1294.75H2048.04V1294.75H2049.16V1294.75H2050.27V1299.80H2051.39V1294.75H2052.50V1294.75H2053.62V1299.80H2054.73V1299.80H2055.85V1294.75H2056.96V1289.70H2058.08V1284.65H2059.19V1284.65H2060.31V1284.65H2061.42V1289.70H2062.53V1299.80H2063.65V1294.75H2064.76V1294.75H2065.88V1294.75H2066.99V1299.80H2068.11V1299.80H2069.22V1294.75H2070.34V1294.75H2071.45V1294.75H2072.57V1299.80H2073.68V1294.75H2074.79V1294.75H2075.91V1299.80H2077.02V1294.75H2078.14V1299.80H2079.25V1299.80H2080.37V1294.75H2081.48V1294.75H2082.60V1294.75H2083.71V1299.80H2084.83V1294.75H2085.94V1294.75H2087.06V1294.75H2088.17V1294.75H2089.28V1294.75H2090.40V1294.75H2091.51V1294.75H2092.63V1294.75H2093.74V1294.75H2094.86V1294.75H2095.97V1299.80H2097.09V1299.80H2098.20V1294.75H2099.32V1294.75H2100.43V1299.80H2101.54V1294.75H2102.66V1299.80H2103.77V1294.75H2104.89V1299.80H2106.00V1299.80H2107.12V1294.75H2108.23V1299.80H2109.35V1299.80H2110.46V1294.75H2111.58V1299.80H2112.69V1299.80H2113.81V1299.80H2114.92V1294.75H2116.03V1299.80H2117.15V1294.75H2118.26V1299.80H2119.38V1299.80H2120.49V1294.75H2121.61V1294.75H2122.72V1299.80H2123.84V1299.80H2124.95V1294.75H2126.07V1299.80H2127.18V1294.75H2128.29V1299.80H2129.41V1299.80H2130.52V1294.75H2131.64V1299.80H2132.75V1294.75H2133.87V1299.80H2134.98V1294.75H2136.10V1299.80H2137.21V1294.75H2138.33V1294.75H2139.44V1299.80H2140.56V1294.75H2141.67V1299.80H2142.78V1294.75H2143.90V1299.80H2145.01V1294.75H2146.13V1299.80H2147.24V1299.80H2148.36V1294.75H2149.47V1299.80H2150.59V1294.75H2151.70V1299.80H2152.82V1294.75H2153.93V1299.80H2155.04V1294.75H2156.16V1299.80H2157.27V1299.80H2158.39V1294.75H2159.50V1299.80H2160.62V1294.75H2161.73V1299.80H2162.85V1299.80H2163.96V1294.75H2165.08V1299.80H2166.19V1294.75H2167.31V1299.80H2168.42V1299.80H2169.53V1294.75H2170.65V1299.80H2171.76V1299.80H2172.88V1294.75H2173.99V1299.80H2175.11V1320.0Z" fill="#9feec0"/>
<path d="M249.11 1320.0V1294.75H250.22V1299.80H251.34V1294.75H252.45V1279.60H253.57V1279.60H254.68V1279.60H255.79V1279.60H256.91V1279.60H258.02V1294.75H259.14V1294.75H260.25V1234.15H261.37V1188.70H262.48V1188.70H263.60V1188.70H264.71V1087.70H265.83V1032.15H266.94V1017.00H268.06V1017.00H269.17V976.60H270.28V1001.85H271.40V1001.85H272.51V1011.95H273.63V1102.85H274.74V1163.45H275.86V1198.80H276.97V1198.80H278.09V1198.80H279.20V1138.20H280.32V996.80H281.43V981.65H282.54V1042.25H283.66V1042.25H284.77V1037.20H285.89V1158.40H287.00V1158.40H288.12V1219.00H289.23V1229.10H290.35V1057.40H291.46V1001.85H292.58V1022.05H293.69V1208.90H294.81V1208.90H295.92V1208.90H297.03V1208.90H298.15V1208.90H299.26V1203.85H300.38V1203.85H301.49V1213.95H302.61V1107.90H303.72V1107.90H304.84V1128.10H305.95V1173.55H307.07V1213.95H308.18V1213.95H309.29V1198.80H310.41V1213.95H311.52V1213.95H312.64V1102.85H313.75V1219.00H314.87V1193.75H315.98V1193.75H317.10V1224.05H318.21V1163.45H319.33V1163.45H320.44V1224.05H321.56V1224.05H322.67V1193.75H323.78V1178.60H324.90V1198.80H326.01V1203.85H327.13V1203.85H328.24V1203.85H329.36V1203.85H330.47V1203.85H331.59V1198.80H332.70V1198.80H333.82V1198.80H334.93V1188.70H336.04V1188.70H337.16V1102.85H338.27V1102.85H339.39V1042.25H340.50V1047.30H341.62V1148.30H342.73V1102.85H343.85V1102.85H344.96V1208.90H346.08V1188.70H347.19V1188.70H348.31V1183.65H349.42V1138.20H350.53V1208.90H351.65V1249.30H352.76V1249.30H353.88V1259.40H354.99V1213.95H356.11V1213.95H357.22V1087.70H358.34V1032.15H359.45V1017.00H360.57V1017.00H361.68V966.50H362.79V1006.90H363.91V1128.10H365.02V996.80H366.14V1097.80H367.25V1097.80H368.37V1198.80H369.48V1198.80H370.60V1082.65H371.71V1006.90H372.83V1006.90H373.94V1097.80H375.06V1203.85H376.17V1203.85H377.28V1203.85H378.40V1188.70H379.51V976.60H380.63V1153.35H381.74V1163.45H382.86V1188.70H383.97V1188.70H385.09V1188.70H386.20V1163.45H387.32V1163.45H388.43V1193.75H389.54V1193.75H390.66V1203.85H391.77V1188.70H392.89V1188.70H394.00V1188.70H395.12V1188.70H396.23V1320.0ZM1212.11 1320.0V1239.20H1213.22V1239.20H1214.34V1193.75H1215.45V1193.75H1216.57V1198.80H1217.68V1183.65H1218.79V1183.65H1219.91V1183.65H1221.02V1188.70H1222.14V1188.70H1223.25V1198.80H1224.37V1203.85H1225.48V1203.85H1226.60V1213.95H1227.71V1213.95H1228.83V1203.85H1229.94V1203.85H1231.06V1203.85H1232.17V1092.75H1233.28V946.30H1234.40V1072.55H1235.51V1102.85H1236.63V1102.85H1237.74V1032.15H1238.86V1037.20H1239.97V1118.00H1241.09V1118.00H1242.20V971.55H1243.32V1128.10H1244.43V1153.35H1245.54V1153.35H1246.66V1208.90H1247.77V1183.65H1248.89V1183.65H1250.00V1163.45H1251.12V1138.20H1252.23V1092.75H1253.35V1092.75H1254.46V1183.65H1255.58V1062.45H1256.69V996.80H1257.81V996.80H1258.92V1042.25H1260.03V986.70H1261.15V1102.85H1262.26V1102.85H1263.38V1138.20H1264.49V1188.70H1265.61V1188.70H1266.72V1193.75H1267.84V1067.50H1268.95V1208.90H1270.07V1208.90H1271.18V1178.60H1272.29V1178.60H1273.41V1173.55H1274.52V1173.55H1275.64V1163.45H1276.75V1163.45H1277.87V1193.75H1278.98V1123.05H1280.10V1133.15H1281.21V1133.15H1282.33V1138.20H1283.44V1138.20H1284.56V1188.70H1285.67V1198.80H1286.78V1198.80H1287.90V1198.80H1289.01V1042.25H1290.13V1208.90H1291.24V1208.90H1292.36V1208.90H1293.47V1198.80H1294.59V1198.80H1295.70V1143.25H1296.82V1193.75H1297.93V1198.80H1299.04V1198.80H1300.16V1203.85H1301.27V1203.85H1302.39V1198.80H1303.50V1198.80H1304.62V1198.80H1305.73V1198.80H1306.85V1224.05H1307.96V1224.05H1309.08V1178.60H1310.19V1178.60H1311.31V1148.30H1312.42V1037.20H1313.53V1037.20H1314.65V1001.85H1315.76V1001.85H1316.88V1087.70H1317.99V1047.30H1319.11V1047.30H1320.22V1011.95H1321.34V1042.25H1322.45V1042.25H1323.57V976.60H1324.68V921.05H1325.79V921.05H1326.91V1067.50H1328.02V1011.95H1329.14V1011.95H1330.25V1027.10H1331.37V1027.10H1332.48V1067.50H1333.60V1208.90H1334.71V1027.10H1335.83V1133.15H1336.94V1133.15H1338.06V1188.70H1339.17V1208.90H1340.28V1234.15H1341.40V1234.15H1342.51V1224.05H1343.63V1213.95H1344.74V1213.95H1345.86V1213.95H1346.97V986.70H1348.09V1042.25H1349.20V1213.95H1350.32V1213.95H1351.43V1213.95H1352.54V1239.20H1353.66V1203.85H1354.77V1203.85H1355.89V1128.10H1357.00V1011.95H1358.12V1052.35H1359.23V1320.0ZM1533.11 1320.0V1259.40H1534.22V1259.40H1535.34V1203.85H1536.45V1203.85H1537.57V1183.65H1538.68V1183.65H1539.79V1193.75H1540.91V1193.75H1542.02V1193.75H1543.14V1193.75H1544.25V1193.75H1545.37V1168.50H1546.48V1168.50H1547.60V1178.60H1548.71V1178.60H1549.83V1183.65H1550.94V1183.65H1552.06V916.00H1553.17V830.15H1554.28V830.15H1555.40V1057.40H1556.51V931.15H1557.63V1062.45H1558.74V976.60H1559.86V976.60H1560.97V1118.00H1562.09V1118.00H1563.20V1203.85H1564.32V1133.15H1565.43V1133.15H1566.54V1193.75H1567.66V1158.40H1568.77V1158.40H1569.89V1087.70H1571.00V1087.70H1572.12V1057.40H1573.23V971.55H1574.35V971.55H1575.46V1158.40H1576.58V1158.40H1577.69V1158.40H1578.81V1077.60H1579.92V1077.60H1581.03V1123.05H1582.15V1072.55H1583.26V1072.55H1584.38V1173.55H1585.49V1173.55H1586.61V1203.85H1587.72V1203.85H1588.84V1203.85H1589.95V1203.85H1591.07V1193.75H1592.18V1193.75H1593.29V1203.85H1594.41V1203.85H1595.52V1188.70H1596.64V1133.15H1597.75V1133.15H1598.87V1183.65H1599.98V1173.55H1601.10V1173.55H1602.21V1173.55H1603.33V1128.10H1604.44V1057.40H1605.56V1057.40H1606.67V1168.50H1607.78V1168.50H1608.90V1183.65H1610.01V1183.65H1611.13V1208.90H1612.24V1208.90H1613.36V1219.00H1614.47V1219.00H1615.59V1219.00H1616.70V1219.00H1617.82V1219.00H1618.93V1219.00H1620.04V1239.20H1621.16V1239.20H1622.27V1244.25H1623.39V1249.30H1624.50V1249.30H1625.62V1249.30H1626.73V1168.50H1627.85V1168.50H1628.96V1067.50H1630.08V1067.50H1631.19V1208.90H1632.31V1219.00H1633.42V1219.00H1634.53V1173.55H1635.65V1001.85H1636.76V1001.85H1637.88V1037.20H1638.99V1037.20H1640.11V991.75H1641.22V966.50H1642.34V966.50H1643.45V946.30H1644.57V971.55H1645.68V971.55H1646.79V1082.65H1647.91V1082.65H1649.02V1102.85H1650.14V1128.10H1651.25V1128.10H1652.37V951.35H1653.48V1133.15H1654.60V1133.15H1655.71V1234.15H1656.83V1234.15H1657.94V1052.35H1659.06V1107.90H1660.17V1107.90H1661.28V1213.95H1662.40V1118.00H1663.51V1118.00H1664.63V1006.90H1665.74V1006.90H1666.86V1062.45H1667.97V1213.95H1669.09V1213.95H1670.20V1153.35H1671.32V1213.95H1672.43V1213.95H1673.54V1213.95H1674.66V1213.95H1675.77V1208.90H1676.89V1102.85H1678.00V1102.85H1679.12V1153.35H1680.23V1320.0ZM1854.11 1320.0V1299.80H1855.22V1234.15H1856.34V1203.85H1857.45V1203.85H1858.57V1229.10H1859.68V1229.10H1860.79V1229.10H1861.91V1229.10H1863.02V1173.55H1864.14V1198.80H1865.25V1198.80H1866.37V1198.80H1867.48V1193.75H1868.60V1193.75H1869.71V1193.75H1870.83V1143.25H1871.94V1143.25H1873.06V1183.65H1874.17V1229.10H1875.28V1229.10H1876.40V1123.05H1877.51V1123.05H1878.63V1097.80H1879.74V971.55H1880.86V1082.65H1881.97V961.45H1883.09V1052.35H1884.20V1052.35H1885.32V1183.65H1886.43V1188.70H1887.54V1188.70H1888.66V1219.00H1889.77V1062.45H1890.89V1062.45H1892.00V991.75H1893.12V1118.00H1894.23V1203.85H1895.35V1203.85H1896.46V1203.85H1897.58V1203.85H1898.69V1178.60H1899.81V1057.40H1900.92V1001.85H1902.03V1037.20H1903.15V1037.20H1904.26V1148.30H1905.38V1203.85H1906.49V1067.50H1907.61V1022.05H1908.72V1022.05H1909.84V1183.65H1910.95V1203.85H1912.07V1219.00H1913.18V1219.00H1914.29V1234.15H1915.41V1234.15H1916.52V1234.15H1917.64V1239.20H1918.75V1102.85H1919.87V991.75H1920.98V991.75H1922.10V1027.10H1923.21V1052.35H1924.33V1173.55H1925.44V1173.55H1926.56V1183.65H1927.67V1183.65H1928.78V1183.65H1929.90V1183.65H1931.01V1198.80H1932.13V1198.80H1933.24V1198.80H1934.36V1062.45H1935.47V1173.55H1936.59V1198.80H1937.70V1198.80H1938.82V1203.85H1939.93V1203.85H1941.04V1198.80H1942.16V1198.80H1943.27V1193.75H1944.39V1203.85H1945.50V1203.85H1946.62V1213.95H1947.73V1208.90H1948.85V1203.85H1949.96V1057.40H1951.08V1011.95H1952.19V1011.95H1953.31V1037.20H1954.42V1087.70H1955.53V1168.50H1956.65V1178.60H1957.76V1178.60H1958.88V1203.85H1959.99V1203.85H1961.11V1203.85H1962.22V1057.40H1963.34V1027.10H1964.45V1027.10H1965.57V1006.90H1966.68V1001.85H1967.79V1107.90H1968.91V1102.85H1970.02V1138.20H1971.14V1138.20H1972.25V1006.90H1973.37V1037.20H1974.48V1052.35H1975.60V1082.65H1976.71V1082.65H1977.83V1208.90H1978.94V1208.90H1980.06V1037.20H1981.17V1037.20H1982.28V1208.90H1983.40V1208.90H1984.51V1208.90H1985.63V1052.35H1986.74V1178.60H1987.86V1208.90H1988.97V1208.90H1990.09V1208.90H1991.20V1198.80H1992.32V1052.35H1993.43V1032.15H1994.54V1178.60H1995.66V1178.60H1996.77V1178.60H1997.89V1158.40H1999.00V1143.25H2000.12V1193.75H2001.23V1320.0ZM2175.11 1320.0V1269.50H2176.22V1213.95H2177.34V1219.00H2178.45V1239.20H2179.57V1249.30H2180.68V1249.30H2181.79V1264.45H2182.91V1259.40H2184.02V1264.45H2185.14V1264.45H2186.25V1259.40H2187.37V1203.85H2188.48V1183.65H2189.60V1188.70H2190.71V1032.15H2191.83V1052.35H2192.94V1203.85H2194.06V1213.95H2195.17V1208.90H2196.28V1213.95H2197.40V1153.35H2198.51V1072.55H2199.63V916.00H2200.74V1173.55H2201.86V1239.20H2202.97V1219.00H2204.09V1183.65H2205.20V1208.90H2206.32V1188.70H2207.43V1011.95H2208.54V1062.45H2209.66V991.75H2210.77V1097.80H2211.89V1213.95H2213.00V1133.15H2214.12V1027.10H2215.23V1244.25H2216.35V1249.30H2217.46V1234.15H2218.58V1249.30H2219.69V1198.80H2220.81V1203.85H2221.92V1047.30H2223.03V1062.45H2224.15V1148.30H2225.26V1168.50H2226.38V1072.55H2227.49V1077.60H2228.61V986.70H2229.72V1072.55H2230.84V1219.00H2231.95V1213.95H2233.07V1097.80H2234.18V1017.00H2235.29V1224.05H2236.41V1213.95H2237.52V1224.05H2238.64V1224.05H2239.75V1213.95H2240.87V1229.10H2241.98V1239.20H2243.10V1239.20H2244.21V1224.05H2245.33V1062.45H2246.44V1011.95H2247.56V1128.10H2248.67V1123.05H2249.78V1118.00H2250.90V1208.90H2252.01V1229.10H2253.13V1234.15H2254.24V1208.90H2255.36V1224.05H2256.47V1224.05H2257.59V1219.00H2258.70V1219.00H2259.82V1234.15H2260.93V1239.20H2262.04V1224.05H2263.16V1213.95H2264.27V1213.95H2265.39V1203.85H2266.50V1213.95H2267.62V1193.75H2268.73V1102.85H2269.85V1188.70H2270.96V1102.85H2272.08V1188.70H2273.19V1112.95H2274.31V1052.35H2275.42V1198.80H2276.53V1138.20H2277.65V1219.00H2278.76V1219.00H2279.88V1224.05H2280.99V1178.60H2282.11V1118.00H2283.22V1188.70H2284.34V1234.15H2285.45V1229.10H2286.57V1219.00H2287.68V1224.05H2288.79V1183.65H2289.91V1077.60H2291.02V1022.05H2292.14V1082.65H2293.25V1097.80H2294.37V1072.55H2295.48V1188.70H2296.60V1234.15H2297.71V1168.50H2298.83V1219.00H2299.94V1264.45H2301.06V1148.30H2302.17V1057.40H2303.28V1107.90H2304.40V1193.75H2305.51V1183.65H2306.63V1193.75H2307.74V1203.85H2308.86V1219.00H2309.97V1239.20H2311.09V1224.05H2312.20V1224.05H2313.32V1244.25H2314.43V1244.25H2315.54V1219.00H2316.66V1239.20H2317.77V1320.00H2318.89V1320.00H2320.00V1320.00H2321.12V1320.00H2322.23V1320.0Z" fill="#22916f"/>
<line x1="168.3" y1="815.0" x2="168.3" y2="1321.0" stroke="#444" stroke-width="1.5"/>
<line x1="168.3" y1="1320.5" x2="2415.3" y2="1320.5" stroke="#555" stroke-width="1.5"/>
<line x1="168.5" y1="1321.0" x2="168.5" y2="1331.0" stroke="#bdbdbd" stroke-width="1.2"/>
<line x1="489.5" y1="1321.0" x2="489.5" y2="1331.0" stroke="#bdbdbd" stroke-width="1.2"/>
<line x1="810.5" y1="1321.0" x2="810.5" y2="1331.0" stroke="#bdbdbd" stroke-width="1.2"/>
<line x1="1131.5" y1="1321.0" x2="1131.5" y2="1331.0" stroke="#bdbdbd" stroke-width="1.2"/>
<line x1="1452.5" y1="1321.0" x2="1452.5" y2="1331.0" stroke="#bdbdbd" stroke-width="1.2"/>
<line x1="1773.5" y1="1321.0" x2="1773.5" y2="1331.0" stroke="#bdbdbd" stroke-width="1.2"/>
<line x1="2094.5" y1="1321.0" x2="2094.5" y2="1331.0" stroke="#bdbdbd" stroke-width="1.2"/>
<line x1="2415.5" y1="1321.0" x2="2415.5" y2="1331.0" stroke="#bdbdbd" stroke-width="1.2"/>
<text x="168.3" y="1356.5" font-size="19" text-anchor="middle" fill="#111" stroke="#111" stroke-width="0.35" textLength="75" lengthAdjust="spacingAndGlyphs">ven. 10</text>
<text x="489.3" y="1356.5" font-size="19" text-anchor="middle" fill="#111" stroke="#111" stroke-width="0.35" textLength="80" lengthAdjust="spacingAndGlyphs">sam. 11</text>
<text x="810.3" y="1356.5" font-size="19" text-anchor="middle" fill="#111" stroke="#111" stroke-width="0.35" textLength="76" lengthAdjust="spacingAndGlyphs">dim. 12</text>
<text x="1131.3" y="1356.5" font-size="19" text-anchor="middle" fill="#111" stroke="#111" stroke-width="0.35" textLength="69" lengthAdjust="spacingAndGlyphs">lun. 13</text>
<text x="1452.3" y="1356.5" font-size="19" text-anchor="middle" fill="#111" stroke="#111" stroke-width="0.35" textLength="75" lengthAdjust="spacingAndGlyphs">mar. 14</text>
<text x="1773.3" y="1356.5" font-size="19" text-anchor="middle" fill="#111" stroke="#111" stroke-width="0.35" textLength="76" lengthAdjust="spacingAndGlyphs">mer. 15</text>
<text x="2094.3" y="1356.5" font-size="19" text-anchor="middle" fill="#111" stroke="#111" stroke-width="0.35" textLength="71" lengthAdjust="spacingAndGlyphs">jeu. 16</text>
<text x="145.5" y="1326.3" font-size="18" text-anchor="end" fill="#333" stroke="#333" stroke-width="0.3" textLength="11.4" lengthAdjust="spacingAndGlyphs">0</text>
<text x="145.5" y="1275.8" font-size="18" text-anchor="end" fill="#333" stroke="#333" stroke-width="0.3" textLength="22.8" lengthAdjust="spacingAndGlyphs">10</text>
<text x="145.5" y="1225.3" font-size="18" text-anchor="end" fill="#333" stroke="#333" stroke-width="0.3" textLength="22.8" lengthAdjust="spacingAndGlyphs">20</text>
<text x="145.5" y="1174.8" font-size="18" text-anchor="end" fill="#333" stroke="#333" stroke-width="0.3" textLength="22.8" lengthAdjust="spacingAndGlyphs">30</text>
<text x="145.5" y="1124.3" font-size="18" text-anchor="end" fill="#333" stroke="#333" stroke-width="0.3" textLength="22.8" lengthAdjust="spacingAndGlyphs">40</text>
<text x="145.5" y="1073.8" font-size="18" text-anchor="end" fill="#333" stroke="#333" stroke-width="0.3" textLength="22.8" lengthAdjust="spacingAndGlyphs">50</text>
<text x="145.5" y="1023.3" font-size="18" text-anchor="end" fill="#333" stroke="#333" stroke-width="0.3" textLength="22.8" lengthAdjust="spacingAndGlyphs">60</text>
<text x="145.5" y="972.8" font-size="18" text-anchor="end" fill="#333" stroke="#333" stroke-width="0.3" textLength="22.8" lengthAdjust="spacingAndGlyphs">70</text>
<text x="145.5" y="922.3" font-size="18" text-anchor="end" fill="#333" stroke="#333" stroke-width="0.3" textLength="22.8" lengthAdjust="spacingAndGlyphs">80</text>
<text x="145.5" y="871.8" font-size="18" text-anchor="end" fill="#333" stroke="#333" stroke-width="0.3" textLength="22.8" lengthAdjust="spacingAndGlyphs">90</text>
<text x="145.5" y="821.3" font-size="18" text-anchor="end" fill="#333" stroke="#333" stroke-width="0.3" textLength="34.2" lengthAdjust="spacingAndGlyphs">100</text>
<text transform="translate(87,1068) rotate(-90)" font-size="19" text-anchor="middle" fill="#333" textLength="29" lengthAdjust="spacingAndGlyphs">kW</text>
<rect x="562" y="806" width="412" height="58" rx="10.5" ry="10.5" fill="#fff" stroke="#7d7d7d" stroke-width="3.2"/>
<text x="778.0" y="845.5" font-size="28" text-anchor="middle" fill="#000" stroke="#000" stroke-width="0.3" textLength="336" lengthAdjust="spacingAndGlyphs">Consommation: 2&#160;400 kWh</text>
<rect x="1100" y="806" width="412" height="58" rx="10.5" ry="10.5" fill="#fff" stroke="#7d7d7d" stroke-width="3.2"/>
<text x="1316.0" y="845.5" font-size="28" text-anchor="middle" fill="#000" stroke="#000" stroke-width="0.3" textLength="189" lengthAdjust="spacingAndGlyphs">P Max :&#160; 97 kW</text>
<rect x="1610" y="806" width="412" height="58" rx="10.5" ry="10.5" fill="#fff" stroke="#7d7d7d" stroke-width="3.2"/>
<text x="1826.0" y="845.5" font-size="28" text-anchor="middle" fill="#000" stroke="#000" stroke-width="0.3" textLength="160" lengthAdjust="spacingAndGlyphs">P min : 4 kW</text>
<rect x="176.5" y="49" width="481.5" height="77.5" fill="#0b0b18"/>
<g fill="none" stroke="url(#eco)" stroke-width="7.8" stroke-linecap="round"><path d="M210.25 94 C210.25 87 206.5 83.3 201.3 83.3 C196 83.3 192.35 88.5 192.35 94.75 C192.35 101.5 196.5 106.2 201.8 106.2 C205 106.2 207.5 105 209.5 103"/><path d="M193 94 H210.5" stroke-width="5.5" stroke-linecap="butt"/><path d="M197.5 74.8 L205.2 71.2" stroke-width="6.5"/><path d="M238.3 86.8 C236.5 84.5 234 83.3 230.3 83.3 C224.8 83.3 221 88.5 221 94.75 C221 101 224.8 106.2 230.3 106.2 C234 106.2 236.5 105 238.5 102.8"/><ellipse cx="257.15" cy="94.75" rx="9.45" ry="11.45"/></g>
<g fill="none" stroke="#fff" stroke-width="7.8" stroke-linecap="round" stroke-linejoin="round"><path d="M275.8 89.5 L283.5 106 L291.5 82.5 L299.5 106 L313 69.5"/><path d="M316.5 86.5 C319 83 323 81.5 327 81.5 C333 81.5 335 85 335 92 V106"/><ellipse cx="325" cy="100.4" rx="7.8" ry="6" stroke-width="6.5"/><path d="M346.5 76 V102 C346.5 105 348 106.3 352 106.3"/><path d="M343.5 82 H355"/><path d="M362 76 V102 C362 105 363.5 106.3 367.5 106.3"/><path d="M359 82 H370"/></g>
<ellipse cx="433.8" cy="88.9" rx="26" ry="28" fill="#00b4e1"/>
<text x="434" y="96" font-size="19" fill="#fff" text-anchor="middle" textLength="32" lengthAdjust="spacingAndGlyphs">Rte</text>
<line x1="424" y1="92" x2="444" y2="92" stroke="#fff" stroke-width="1.2"/>
<g font-size="11" font-weight="bold" fill="#00a6d6"><text x="468.5" y="79.5" textLength="48" lengthAdjust="spacingAndGlyphs">Le réseau</text><text x="468.5" y="92.5" textLength="61" lengthAdjust="spacingAndGlyphs">de transport</text><text x="468.5" y="105" textLength="57" lengthAdjust="spacingAndGlyphs">d’électricité</text></g>
<rect x="546.2" y="61.4" width="100.8" height="55.4" fill="#fff"/>
<rect x="553" y="69" width="7" height="6.5" fill="#2a3a8c"/><rect x="560" y="69" width="5" height="6.5" fill="#fff"/><rect x="564" y="69" width="8" height="6.5" fill="#e1000f"/>
<g font-size="6.2" font-weight="bold" fill="#222"><text x="553" y="84" textLength="44" lengthAdjust="spacingAndGlyphs">RÉPUBLIQUE</text><text x="553" y="92" textLength="41" lengthAdjust="spacingAndGlyphs">FRANÇAISE</text></g>
<g stroke="#999" stroke-width="0.8"><line x1="553" y1="98.5" x2="563" y2="98.5"/><line x1="553" y1="103" x2="563" y2="103"/><line x1="553" y1="107.5" x2="566" y2="107.5"/></g>
<rect x="607.5" y="67" width="34.5" height="44.5" fill="#fff" stroke="#5b86c8" stroke-width="1.3"/>
<text x="624.7" y="75.5" font-size="6.5" font-weight="bold" fill="#e2202a" text-anchor="middle" textLength="25" lengthAdjust="spacingAndGlyphs">ADEME</text>
<circle cx="624.5" cy="87.2" r="8.3" fill="#2c5bb5"/><path d="M620 83 q3 -2 5 1 q-1 3 2 5 q-2 3 -4 2 z" fill="#7f9bd8"/>
<g fill="#e2202a"><rect x="612" y="99" width="25" height="1.6"/><rect x="612" y="102.5" width="25" height="1.6"/><rect x="613" y="106" width="23" height="1.6"/></g>
<rect x="171" y="138" width="487.5" height="118.5" fill="none" stroke="#dadada" stroke-width="4"/><line x1="169" y1="256" x2="660.5" y2="256" stroke="#dadada" stroke-width="5"/>
<line x1="170" y1="191.8" x2="660" y2="191.8" stroke="#dadada" stroke-width="4"/>
<line x1="292" y1="137" x2="292" y2="258" stroke="#dadada" stroke-width="5"/>
<line x1="413.8" y1="137" x2="413.8" y2="258" stroke="#dadada" stroke-width="5"/>
<line x1="535.7" y1="137" x2="535.7" y2="258" stroke="#dadada" stroke-width="5"/>
<g font-size="31" fill="#000"><text x="231" y="175" text-anchor="middle">J</text><text x="353" y="175" text-anchor="middle" textLength="80" lengthAdjust="spacing">J + 1</text><text x="475" y="175" text-anchor="middle" textLength="83" lengthAdjust="spacing">J + <tspan font-weight="bold">2</tspan></text><text x="596" y="175" text-anchor="middle" textLength="78" lengthAdjust="spacing">J + 3</text></g>
<g><rect x="180.5" y="195" width="105.5" height="55" fill="url(#wave)"/><path d="M195.59 195.00 L209.41 195.00 C224.81 201.60 238.53 205.45 252.24 205.28 C267.01 204.90 277.56 201.60 286.00 199.01 L286.00 211.72 C277.56 215.90 267.01 218.65 252.24 219.20 C238.53 219.75 217.43 208.75 195.59 195.00 Z" fill="#00f2c8"/><path d="M209.41 195.00 L286.00 195.00 L286.00 199.01 C277.56 201.60 267.01 204.90 252.24 205.28 C238.53 205.45 224.81 201.60 209.41 195.00 Z" fill="#00a68a"/></g>
<g><rect x="302" y="196" width="106" height="56" fill="url(#wave)"/><path d="M317.16 196.00 L331.04 196.00 C346.52 202.72 360.30 206.64 374.08 206.47 C388.92 206.08 399.52 202.72 408.00 200.09 L408.00 213.02 C399.52 217.28 388.92 220.08 374.08 220.64 C360.30 221.20 339.10 210.00 317.16 196.00 Z" fill="#00f2c8"/><path d="M331.04 196.00 L408.00 196.00 L408.00 200.09 C399.52 202.72 388.92 206.08 374.08 206.47 C360.30 206.64 346.52 202.72 331.04 196.00 Z" fill="#00a68a"/></g>
<g><rect x="424" y="196" width="106" height="56" fill="url(#wave)"/><path d="M439.16 196.00 L453.04 196.00 C468.52 202.72 482.30 206.64 496.08 206.47 C510.92 206.08 521.52 202.72 530.00 200.09 L530.00 213.02 C521.52 217.28 510.92 220.08 496.08 220.64 C482.30 221.20 461.10 210.00 439.16 196.00 Z" fill="#00f2c8"/><path d="M453.04 196.00 L530.00 196.00 L530.00 200.09 C521.52 202.72 510.92 206.08 496.08 206.47 C482.30 206.64 468.52 202.72 453.04 196.00 Z" fill="#00a68a"/></g>
<g><rect x="544" y="196" width="106" height="56" fill="url(#wave)"/><path d="M559.16 196.00 L573.04 196.00 C588.52 202.72 602.30 206.64 616.08 206.47 C630.92 206.08 641.52 202.72 650.00 200.09 L650.00 213.02 C641.52 217.28 630.92 220.08 616.08 220.64 C602.30 221.20 581.10 210.00 559.16 196.00 Z" fill="#00f2c8"/><path d="M573.04 196.00 L650.00 196.00 L650.00 200.09 C641.52 202.72 630.92 206.08 616.08 206.47 C602.30 206.64 588.52 202.72 573.04 196.00 Z" fill="#00a68a"/></g>
<rect x="2320" y="1322" width="117.5" height="56" fill="#fff"/>
<g fill="none" stroke="#0a72bc" stroke-width="5.2" stroke-linecap="round"><path d="M2360.5 1342.5 C2358 1337.5 2354 1335.5 2349.5 1335.5 C2342 1335.5 2336.5 1341.5 2336.5 1349 C2336.5 1356.5 2342 1362 2349.5 1362 C2356.5 1362 2361.5 1357 2361.5 1351 H2350"/><path d="M2369 1346 C2369 1341 2372.5 1338.5 2376.5 1338.5 C2381 1338.5 2384 1341.5 2384 1346 C2384 1351 2378 1355 2371 1361.5"/></g>
<path d="M2368 1360 L2386.5 1360 L2386.5 1363.5 L2368 1363.5 Z" fill="#0a72bc"/>
<path d="M2392 1324.5 L2383.5 1338 L2390 1339 L2385.5 1363 L2399 1339.5 L2392 1338.5 Z" fill="#e85a28"/>
<g fill="#f39323"><path d="M2401 1339 H2424 L2419.5 1345 H2397 Z"/><path d="M2397 1348 H2418 L2413.5 1354 H2393 Z"/><path d="M2393 1357 H2417 L2412.5 1363 H2389 Z"/></g>
<text x="2392" y="1334.5" font-size="7" font-weight="bold" fill="#e85a28" textLength="31" lengthAdjust="spacingAndGlyphs">FRANCE</text>
<rect x="2340" y="1365.5" width="72" height="1.2" fill="#5a9bd5"/>
<rect x="2510" y="0" width="1" height="1415" fill="#000"/><rect x="0" y="1414" width="2511" height="1" fill="#000"/>
</svg></body></html>
